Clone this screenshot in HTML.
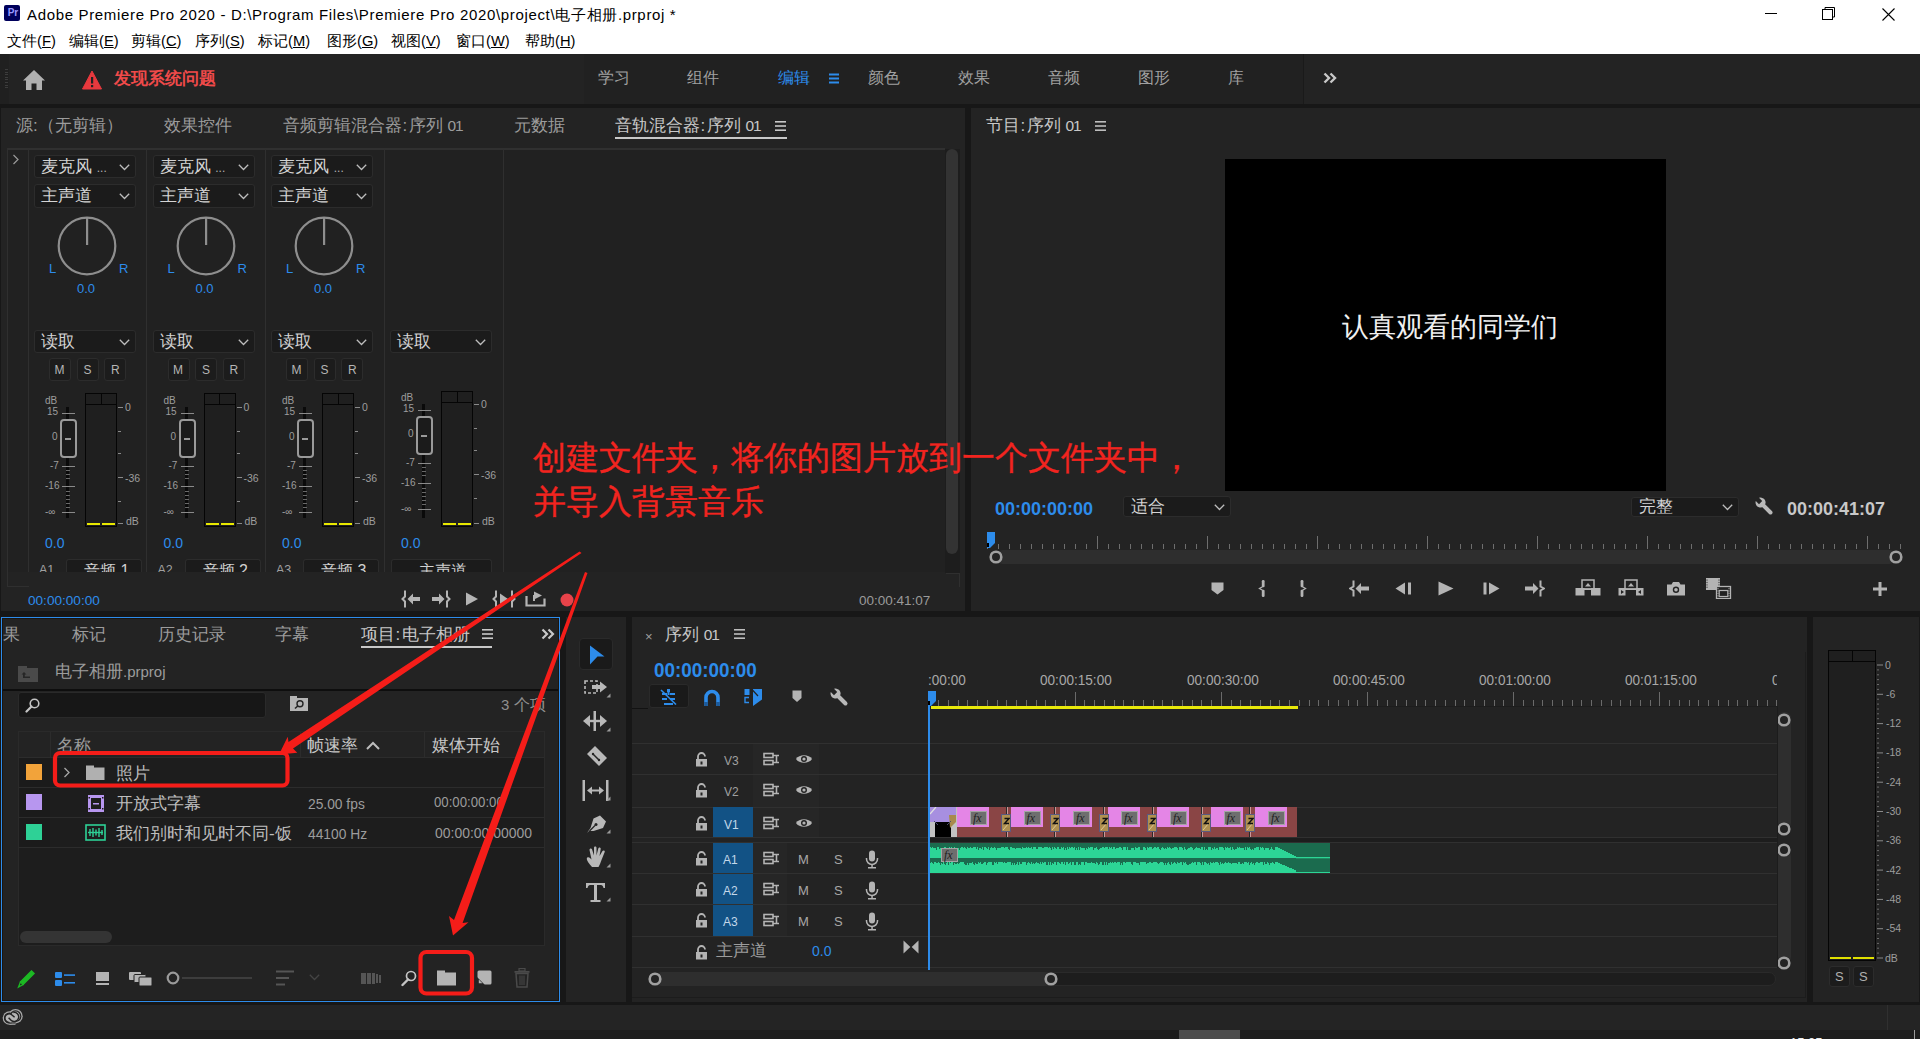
<!DOCTYPE html>
<html><head><meta charset="utf-8">
<style>
*{box-sizing:border-box;margin:0;padding:0}
html,body{width:1920px;height:1039px;overflow:hidden;background:#171717;font-family:"Liberation Sans",sans-serif;position:relative}
.a{position:absolute}
.t{position:absolute;white-space:nowrap;line-height:1}
</style></head><body>
<div class="a" style="left:0px;top:0px;width:1920px;height:54px;background:#fff;"></div>
<div class="a" style="left:4px;top:5px;width:16px;height:16px;background:#00005b;border-radius:2px"></div>
<div class="t" style="left:7.8px;top:8px;font-size:10px;color:#9999ff;font-weight:bold;letter-spacing:-0.3px">Pr</div>
<div class="t" style="left:27px;top:7.2px;font-size:15px;color:#000;letter-spacing:0.66px">Adobe Premiere Pro 2020 - D:\Program Files\Premiere Pro 2020\project\电子相册.prproj *</div>
<div class="t" style="left:7px;top:34px;font-size:14.7px;color:#000;">文件(<u>F</u>)</div>
<div class="t" style="left:69px;top:34px;font-size:14.7px;color:#000;">编辑(<u>E</u>)</div>
<div class="t" style="left:131px;top:34px;font-size:14.7px;color:#000;">剪辑(<u>C</u>)</div>
<div class="t" style="left:195px;top:34px;font-size:14.7px;color:#000;">序列(<u>S</u>)</div>
<div class="t" style="left:258px;top:34px;font-size:14.7px;color:#000;">标记(<u>M</u>)</div>
<div class="t" style="left:327px;top:34px;font-size:14.7px;color:#000;">图形(<u>G</u>)</div>
<div class="t" style="left:391px;top:34px;font-size:14.7px;color:#000;">视图(<u>V</u>)</div>
<div class="t" style="left:456px;top:34px;font-size:14.7px;color:#000;">窗口(<u>W</u>)</div>
<div class="t" style="left:525px;top:34px;font-size:14.7px;color:#000;">帮助(<u>H</u>)</div>
<svg class="a" style="left:1765px;top:13px;" width="14" height="2" viewBox="0 0 14 2"><rect x="0" y="0" width="12" height="1" fill="#000"/></svg>
<svg class="a" style="left:1822px;top:7px;" width="14" height="14" viewBox="0 0 14 14"><rect x="0.5" y="2.5" width="10" height="10" fill="none" stroke="#000"/><path d="M3 2.5V0.5H12.5V10H10.5" fill="none" stroke="#000"/></svg>
<svg class="a" style="left:1882px;top:8px;" width="14" height="14" viewBox="0 0 14 14"><path d="M0.5 0.5L12.5 12.5M12.5 0.5L0.5 12.5" stroke="#000" stroke-width="1.1"/></svg>
<div class="a" style="left:0px;top:54px;width:1920px;height:50px;background:#232323;"></div>
<div class="a" style="left:584px;top:54px;width:719px;height:50px;background:#212121;"></div>
<div class="a" style="left:1303px;top:54px;width:1px;height:50px;background:#1a1a1a;"></div>
<div class="a" style="left:0px;top:54px;width:9px;height:50px;background:#202020;"></div>
<div class="a" style="left:5px;top:69.0px;width:3px;height:1px;background:#3c3c3c;"></div>
<div class="a" style="left:5px;top:71.6px;width:3px;height:1px;background:#3c3c3c;"></div>
<div class="a" style="left:5px;top:74.2px;width:3px;height:1px;background:#3c3c3c;"></div>
<div class="a" style="left:5px;top:76.8px;width:3px;height:1px;background:#3c3c3c;"></div>
<div class="a" style="left:5px;top:79.4px;width:3px;height:1px;background:#3c3c3c;"></div>
<div class="a" style="left:5px;top:82.0px;width:3px;height:1px;background:#3c3c3c;"></div>
<div class="a" style="left:5px;top:84.6px;width:3px;height:1px;background:#3c3c3c;"></div>
<div class="a" style="left:5px;top:87.2px;width:3px;height:1px;background:#3c3c3c;"></div>
<svg class="a" style="left:22px;top:70px;" width="24" height="20" viewBox="0 0 24 20"><path d="M12 0L23 10.5H20V20H14.5V13.5H9.5V20H4V10.5H1Z" fill="#b0b0b0"/></svg>
<svg class="a" style="left:82px;top:70px;" width="20" height="20" viewBox="0 0 20 20"><path d="M10 1L19.5 19H0.5Z" fill="#e8393e" stroke="#e8393e" stroke-width="1" stroke-linejoin="round"/><rect x="9" y="7" width="2.2" height="6.5" fill="#232323"/><rect x="9" y="15" width="2.2" height="2.2" fill="#232323"/></svg>
<div class="t" style="left:113.5px;top:70px;font-size:16.5px;color:#f04a4a;font-weight:bold">发现系统问题</div>
<div class="t" style="left:598px;top:70px;font-size:16px;color:#a0a0a0;">学习</div>
<div class="t" style="left:687px;top:70px;font-size:16px;color:#a0a0a0;">组件</div>
<div class="t" style="left:868px;top:70px;font-size:16px;color:#a0a0a0;">颜色</div>
<div class="t" style="left:958px;top:70px;font-size:16px;color:#a0a0a0;">效果</div>
<div class="t" style="left:1048px;top:70px;font-size:16px;color:#a0a0a0;">音频</div>
<div class="t" style="left:1138px;top:70px;font-size:16px;color:#a0a0a0;">图形</div>
<div class="t" style="left:1228px;top:70px;font-size:16px;color:#a0a0a0;">库</div>
<div class="t" style="left:778px;top:70px;font-size:16px;color:#2d8ceb;">编辑</div>
<svg class="a" style="left:829px;top:73px;" width="10" height="11" viewBox="0 0 10 11"><rect x="0" y="0.5" width="10" height="2" fill="#2d8ceb"/><rect x="0" y="4.5" width="10" height="2" fill="#2d8ceb"/><rect x="0" y="8.5" width="10" height="2" fill="#2d8ceb"/></svg>
<svg class="a" style="left:1323px;top:72px;" width="14" height="12" viewBox="0 0 14 12"><path d="M1.5 1.5L6 6L1.5 10.5M7.5 1.5L12 6L7.5 10.5" fill="none" stroke="#c8c8c8" stroke-width="2.4"/></svg>
<div class="a" style="left:1px;top:108px;width:964px;height:503px;background:#232323;"></div>
<div class="t" style="left:16px;top:117px;font-size:17px;color:#9c9c9c;">源:（无剪辑）</div>
<div class="t" style="left:164px;top:117px;font-size:17px;color:#9c9c9c;">效果控件</div>
<div class="t" style="left:283px;top:117px;font-size:17px;color:#9c9c9c;">音频剪辑混合器<span style="margin:0 1.5px 0 0.5px">:</span>序列 <span style="font-size:15.5px;letter-spacing:-1px">01</span></div>
<div class="t" style="left:514px;top:117px;font-size:17px;color:#9c9c9c;">元数据</div>
<div class="t" style="left:615px;top:117px;font-size:17px;color:#c8c8c8;">音轨混合器<span style="margin:0 1.5px 0 0.5px">:</span>序列 <span style="font-size:15.5px;letter-spacing:-1px">01</span></div>
<svg class="a" style="left:775px;top:121px;" width="11" height="11" viewBox="0 0 11 11"><rect x="0" y="0" width="11" height="1.6" fill="#c8c8c8"/><rect x="0" y="4.2" width="11" height="1.6" fill="#c8c8c8"/><rect x="0" y="8.4" width="11" height="1.6" fill="#c8c8c8"/></svg>
<div class="a" style="left:615px;top:137px;width:172px;height:2px;background:#c8c8c8;"></div>
<div class="a" style="left:8px;top:149px;width:937px;height:423px;background:#212121;"></div>
<div class="a" style="left:7px;top:147.5px;width:938px;height:2px;background:#303030;"></div>
<div class="a" style="left:7px;top:148px;width:1px;height:439px;background:#2f2f2f;"></div>
<div class="a" style="left:7px;top:586px;width:22px;height:1px;background:#2f2f2f;"></div>
<div class="a" style="left:28px;top:149px;width:1px;height:423px;background:#2f2f2f;"></div>
<svg class="a" style="left:12px;top:154px;" width="8" height="12" viewBox="0 0 8 12"><path d="M1.5 1L6 5.5L1.5 10" fill="none" stroke="#9a9a9a" stroke-width="1.2"/></svg>
<div class="a" style="left:34px;top:155px;width:102px;height:23px;background:#1b1b1b;border:1px solid #2c2c2c;border-radius:3px"></div>
<div class="t" style="left:41px;top:157.5px;font-size:17px;color:#d4d4d4;">麦克风 <span style="font-size:12px;color:#b0b0b0;position:relative;top:0px">...</span></div>
<svg class="a" style="left:119px;top:163.5px;" width="11" height="7" viewBox="0 0 11 7"><path d="M0.8 0.8L5.5 5.5L10.2 0.8" fill="none" stroke="#bdbdbd" stroke-width="1.3"/></svg>
<div class="a" style="left:34px;top:184px;width:102px;height:24px;background:#1b1b1b;border:1px solid #2c2c2c;border-radius:3px"></div>
<div class="t" style="left:41px;top:187px;font-size:17px;color:#d4d4d4;">主声道</div>
<svg class="a" style="left:119px;top:193.0px;" width="11" height="7" viewBox="0 0 11 7"><path d="M0.8 0.8L5.5 5.5L10.2 0.8" fill="none" stroke="#bdbdbd" stroke-width="1.3"/></svg>
<svg class="a" style="left:56px;top:215px;" width="62" height="62" viewBox="0 0 62 62"><circle cx="31" cy="31" r="28.3" fill="none" stroke="#8e8e8e" stroke-width="2.2"/><rect x="30" y="2" width="2.2" height="28" fill="#8e8e8e"/></svg>
<div class="t" style="left:49px;top:262px;font-size:13px;color:#2d8ceb;">L</div>
<div class="t" style="left:119px;top:262px;font-size:13px;color:#2d8ceb;">R</div>
<div class="t" style="left:77px;top:282px;font-size:13px;color:#2d8ceb;">0.0</div>
<div class="a" style="left:34px;top:330px;width:102px;height:23px;background:#1b1b1b;border:1px solid #2c2c2c;border-radius:3px"></div>
<div class="t" style="left:41px;top:332.5px;font-size:17px;color:#d4d4d4;">读取</div>
<svg class="a" style="left:119px;top:338.5px;" width="11" height="7" viewBox="0 0 11 7"><path d="M0.8 0.8L5.5 5.5L10.2 0.8" fill="none" stroke="#bdbdbd" stroke-width="1.3"/></svg>
<div class="a" style="left:49.0px;top:358px;width:22px;height:23px;background:#1c1c1c;border:1px solid #2c2c2c;border-radius:3px"></div>
<div class="t" style="left:54.5px;top:364px;font-size:12px;color:#b5b5b5;">M</div>
<div class="a" style="left:76.5px;top:358px;width:22px;height:23px;background:#1c1c1c;border:1px solid #2c2c2c;border-radius:3px"></div>
<div class="t" style="left:83.5px;top:364px;font-size:12px;color:#b5b5b5;">S</div>
<div class="a" style="left:104.0px;top:358px;width:22px;height:23px;background:#1c1c1c;border:1px solid #2c2c2c;border-radius:3px"></div>
<div class="t" style="left:111.0px;top:364px;font-size:12px;color:#b5b5b5;">R</div>
<div class="t" style="left:45px;top:396px;font-size:10px;color:#9d9d9d;">dB</div>
<div class="t" style="left:47px;top:407px;font-size:10px;color:#9d9d9d;">15</div>
<div class="t" style="left:52px;top:432px;font-size:10px;color:#9d9d9d;">0</div>
<div class="t" style="left:50px;top:461px;font-size:10px;color:#9d9d9d;">-7</div>
<div class="t" style="left:45px;top:481px;font-size:10px;color:#9d9d9d;">-16</div>
<div class="t" style="left:45px;top:507px;font-size:10px;color:#9d9d9d;">-∞</div>
<div class="a" style="left:66px;top:407px;width:3px;height:111px;background:#0a0a0a;"></div>
<div class="a" style="left:62px;top:413px;width:13px;height:1px;background:#8a8a8a;"></div>
<div class="a" style="left:62px;top:466px;width:13px;height:1px;background:#8a8a8a;"></div>
<div class="a" style="left:62px;top:486px;width:13px;height:1px;background:#8a8a8a;"></div>
<div class="a" style="left:62px;top:512px;width:13px;height:1px;background:#8a8a8a;"></div>
<div class="a" style="left:66px;top:470px;width:4px;height:1px;background:#6a6a6a;"></div>
<div class="a" style="left:66px;top:474px;width:4px;height:1px;background:#6a6a6a;"></div>
<div class="a" style="left:66px;top:478px;width:4px;height:1px;background:#6a6a6a;"></div>
<div class="a" style="left:66px;top:491px;width:4px;height:1px;background:#6a6a6a;"></div>
<div class="a" style="left:66px;top:495px;width:4px;height:1px;background:#6a6a6a;"></div>
<div class="a" style="left:66px;top:499px;width:4px;height:1px;background:#6a6a6a;"></div>
<div class="a" style="left:66px;top:503px;width:4px;height:1px;background:#6a6a6a;"></div>
<div class="a" style="left:66px;top:507px;width:4px;height:1px;background:#6a6a6a;"></div>
<div class="a" style="left:66px;top:440px;width:4px;height:1px;background:#6a6a6a;"></div>
<div class="a" style="left:60px;top:419px;width:17px;height:39px;background:#1b1b1b;border:2px solid #9a9a9a;border-radius:4px"></div>
<div class="a" style="left:65px;top:437.5px;width:6px;height:2px;background:#9a9a9a;"></div>
<div class="a" style="left:85px;top:393px;width:32px;height:134px;background:#1f1f1f;border:1px solid #050505"></div>
<div class="a" style="left:85px;top:404px;width:32px;height:1px;background:#050505;"></div>
<div class="a" style="left:100.5px;top:393px;width:1px;height:12px;background:#050505;"></div>
<div class="a" style="left:87px;top:523px;width:13px;height:2px;background:#e8e800;"></div>
<div class="a" style="left:102px;top:523px;width:13px;height:2px;background:#e8e800;"></div>
<div class="a" style="left:118px;top:407px;width:5px;height:1px;background:#8a8a8a;"></div>
<div class="a" style="left:118px;top:431px;width:3px;height:1px;background:#8a8a8a;"></div>
<div class="a" style="left:118px;top:453px;width:3px;height:1px;background:#8a8a8a;"></div>
<div class="a" style="left:118px;top:477px;width:5px;height:1px;background:#8a8a8a;"></div>
<div class="a" style="left:118px;top:501px;width:3px;height:1px;background:#8a8a8a;"></div>
<div class="a" style="left:118px;top:523px;width:5px;height:1px;background:#8a8a8a;"></div>
<div class="t" style="left:125px;top:402px;font-size:10.5px;color:#9d9d9d;">0</div>
<div class="t" style="left:125px;top:473px;font-size:10.5px;color:#9d9d9d;">-36</div>
<div class="t" style="left:126px;top:516px;font-size:10.5px;color:#9d9d9d;">dB</div>
<div class="t" style="left:45px;top:536px;font-size:14px;color:#2d8ceb;">0.0</div>
<div class="t" style="left:39px;top:564px;font-size:12.5px;color:#a0a0a0;clip-path:inset(0 0 4px 0)">A1</div>
<div class="a" style="left:66px;top:559px;width:76px;height:14px;background:#1b1b1b;border:1px solid #2c2c2c;border-bottom:none;border-radius:3px 3px 0 0;overflow:hidden"></div>
<div class="t" style="left:84px;top:563px;font-size:16px;color:#d0d0d0;clip-path:inset(0 0 7px 0)">音频 1</div>
<div class="a" style="left:146px;top:149px;width:1px;height:423px;background:#2f2f2f;"></div>
<div class="a" style="left:152.5px;top:155px;width:102px;height:23px;background:#1b1b1b;border:1px solid #2c2c2c;border-radius:3px"></div>
<div class="t" style="left:159.5px;top:157.5px;font-size:17px;color:#d4d4d4;">麦克风 <span style="font-size:12px;color:#b0b0b0;position:relative;top:0px">...</span></div>
<svg class="a" style="left:237.5px;top:163.5px;" width="11" height="7" viewBox="0 0 11 7"><path d="M0.8 0.8L5.5 5.5L10.2 0.8" fill="none" stroke="#bdbdbd" stroke-width="1.3"/></svg>
<div class="a" style="left:152.5px;top:184px;width:102px;height:24px;background:#1b1b1b;border:1px solid #2c2c2c;border-radius:3px"></div>
<div class="t" style="left:159.5px;top:187px;font-size:17px;color:#d4d4d4;">主声道</div>
<svg class="a" style="left:237.5px;top:193.0px;" width="11" height="7" viewBox="0 0 11 7"><path d="M0.8 0.8L5.5 5.5L10.2 0.8" fill="none" stroke="#bdbdbd" stroke-width="1.3"/></svg>
<svg class="a" style="left:174.5px;top:215px;" width="62" height="62" viewBox="0 0 62 62"><circle cx="31" cy="31" r="28.3" fill="none" stroke="#8e8e8e" stroke-width="2.2"/><rect x="30" y="2" width="2.2" height="28" fill="#8e8e8e"/></svg>
<div class="t" style="left:167.5px;top:262px;font-size:13px;color:#2d8ceb;">L</div>
<div class="t" style="left:237.5px;top:262px;font-size:13px;color:#2d8ceb;">R</div>
<div class="t" style="left:195.5px;top:282px;font-size:13px;color:#2d8ceb;">0.0</div>
<div class="a" style="left:152.5px;top:330px;width:102px;height:23px;background:#1b1b1b;border:1px solid #2c2c2c;border-radius:3px"></div>
<div class="t" style="left:159.5px;top:332.5px;font-size:17px;color:#d4d4d4;">读取</div>
<svg class="a" style="left:237.5px;top:338.5px;" width="11" height="7" viewBox="0 0 11 7"><path d="M0.8 0.8L5.5 5.5L10.2 0.8" fill="none" stroke="#bdbdbd" stroke-width="1.3"/></svg>
<div class="a" style="left:167.5px;top:358px;width:22px;height:23px;background:#1c1c1c;border:1px solid #2c2c2c;border-radius:3px"></div>
<div class="t" style="left:173.0px;top:364px;font-size:12px;color:#b5b5b5;">M</div>
<div class="a" style="left:195.0px;top:358px;width:22px;height:23px;background:#1c1c1c;border:1px solid #2c2c2c;border-radius:3px"></div>
<div class="t" style="left:202.0px;top:364px;font-size:12px;color:#b5b5b5;">S</div>
<div class="a" style="left:222.5px;top:358px;width:22px;height:23px;background:#1c1c1c;border:1px solid #2c2c2c;border-radius:3px"></div>
<div class="t" style="left:229.5px;top:364px;font-size:12px;color:#b5b5b5;">R</div>
<div class="t" style="left:163.5px;top:396px;font-size:10px;color:#9d9d9d;">dB</div>
<div class="t" style="left:165.5px;top:407px;font-size:10px;color:#9d9d9d;">15</div>
<div class="t" style="left:170.5px;top:432px;font-size:10px;color:#9d9d9d;">0</div>
<div class="t" style="left:168.5px;top:461px;font-size:10px;color:#9d9d9d;">-7</div>
<div class="t" style="left:163.5px;top:481px;font-size:10px;color:#9d9d9d;">-16</div>
<div class="t" style="left:163.5px;top:507px;font-size:10px;color:#9d9d9d;">-∞</div>
<div class="a" style="left:184.5px;top:407px;width:3px;height:111px;background:#0a0a0a;"></div>
<div class="a" style="left:180.5px;top:413px;width:13px;height:1px;background:#8a8a8a;"></div>
<div class="a" style="left:180.5px;top:466px;width:13px;height:1px;background:#8a8a8a;"></div>
<div class="a" style="left:180.5px;top:486px;width:13px;height:1px;background:#8a8a8a;"></div>
<div class="a" style="left:180.5px;top:512px;width:13px;height:1px;background:#8a8a8a;"></div>
<div class="a" style="left:184.5px;top:470px;width:4px;height:1px;background:#6a6a6a;"></div>
<div class="a" style="left:184.5px;top:474px;width:4px;height:1px;background:#6a6a6a;"></div>
<div class="a" style="left:184.5px;top:478px;width:4px;height:1px;background:#6a6a6a;"></div>
<div class="a" style="left:184.5px;top:491px;width:4px;height:1px;background:#6a6a6a;"></div>
<div class="a" style="left:184.5px;top:495px;width:4px;height:1px;background:#6a6a6a;"></div>
<div class="a" style="left:184.5px;top:499px;width:4px;height:1px;background:#6a6a6a;"></div>
<div class="a" style="left:184.5px;top:503px;width:4px;height:1px;background:#6a6a6a;"></div>
<div class="a" style="left:184.5px;top:507px;width:4px;height:1px;background:#6a6a6a;"></div>
<div class="a" style="left:184.5px;top:440px;width:4px;height:1px;background:#6a6a6a;"></div>
<div class="a" style="left:178.5px;top:419px;width:17px;height:39px;background:#1b1b1b;border:2px solid #9a9a9a;border-radius:4px"></div>
<div class="a" style="left:183.5px;top:437.5px;width:6px;height:2px;background:#9a9a9a;"></div>
<div class="a" style="left:203.5px;top:393px;width:32px;height:134px;background:#1f1f1f;border:1px solid #050505"></div>
<div class="a" style="left:203.5px;top:404px;width:32px;height:1px;background:#050505;"></div>
<div class="a" style="left:219.0px;top:393px;width:1px;height:12px;background:#050505;"></div>
<div class="a" style="left:205.5px;top:523px;width:13px;height:2px;background:#e8e800;"></div>
<div class="a" style="left:220.5px;top:523px;width:13px;height:2px;background:#e8e800;"></div>
<div class="a" style="left:236.5px;top:407px;width:5px;height:1px;background:#8a8a8a;"></div>
<div class="a" style="left:236.5px;top:431px;width:3px;height:1px;background:#8a8a8a;"></div>
<div class="a" style="left:236.5px;top:453px;width:3px;height:1px;background:#8a8a8a;"></div>
<div class="a" style="left:236.5px;top:477px;width:5px;height:1px;background:#8a8a8a;"></div>
<div class="a" style="left:236.5px;top:501px;width:3px;height:1px;background:#8a8a8a;"></div>
<div class="a" style="left:236.5px;top:523px;width:5px;height:1px;background:#8a8a8a;"></div>
<div class="t" style="left:243.5px;top:402px;font-size:10.5px;color:#9d9d9d;">0</div>
<div class="t" style="left:243.5px;top:473px;font-size:10.5px;color:#9d9d9d;">-36</div>
<div class="t" style="left:244.5px;top:516px;font-size:10.5px;color:#9d9d9d;">dB</div>
<div class="t" style="left:163.5px;top:536px;font-size:14px;color:#2d8ceb;">0.0</div>
<div class="t" style="left:157.5px;top:564px;font-size:12.5px;color:#a0a0a0;clip-path:inset(0 0 4px 0)">A2</div>
<div class="a" style="left:184.5px;top:559px;width:76px;height:14px;background:#1b1b1b;border:1px solid #2c2c2c;border-bottom:none;border-radius:3px 3px 0 0;overflow:hidden"></div>
<div class="t" style="left:202.5px;top:563px;font-size:16px;color:#d0d0d0;clip-path:inset(0 0 7px 0)">音频 2</div>
<div class="a" style="left:265px;top:149px;width:1px;height:423px;background:#2f2f2f;"></div>
<div class="a" style="left:271px;top:155px;width:102px;height:23px;background:#1b1b1b;border:1px solid #2c2c2c;border-radius:3px"></div>
<div class="t" style="left:278px;top:157.5px;font-size:17px;color:#d4d4d4;">麦克风 <span style="font-size:12px;color:#b0b0b0;position:relative;top:0px">...</span></div>
<svg class="a" style="left:356px;top:163.5px;" width="11" height="7" viewBox="0 0 11 7"><path d="M0.8 0.8L5.5 5.5L10.2 0.8" fill="none" stroke="#bdbdbd" stroke-width="1.3"/></svg>
<div class="a" style="left:271px;top:184px;width:102px;height:24px;background:#1b1b1b;border:1px solid #2c2c2c;border-radius:3px"></div>
<div class="t" style="left:278px;top:187px;font-size:17px;color:#d4d4d4;">主声道</div>
<svg class="a" style="left:356px;top:193.0px;" width="11" height="7" viewBox="0 0 11 7"><path d="M0.8 0.8L5.5 5.5L10.2 0.8" fill="none" stroke="#bdbdbd" stroke-width="1.3"/></svg>
<svg class="a" style="left:293px;top:215px;" width="62" height="62" viewBox="0 0 62 62"><circle cx="31" cy="31" r="28.3" fill="none" stroke="#8e8e8e" stroke-width="2.2"/><rect x="30" y="2" width="2.2" height="28" fill="#8e8e8e"/></svg>
<div class="t" style="left:286px;top:262px;font-size:13px;color:#2d8ceb;">L</div>
<div class="t" style="left:356px;top:262px;font-size:13px;color:#2d8ceb;">R</div>
<div class="t" style="left:314px;top:282px;font-size:13px;color:#2d8ceb;">0.0</div>
<div class="a" style="left:271px;top:330px;width:102px;height:23px;background:#1b1b1b;border:1px solid #2c2c2c;border-radius:3px"></div>
<div class="t" style="left:278px;top:332.5px;font-size:17px;color:#d4d4d4;">读取</div>
<svg class="a" style="left:356px;top:338.5px;" width="11" height="7" viewBox="0 0 11 7"><path d="M0.8 0.8L5.5 5.5L10.2 0.8" fill="none" stroke="#bdbdbd" stroke-width="1.3"/></svg>
<div class="a" style="left:286.0px;top:358px;width:22px;height:23px;background:#1c1c1c;border:1px solid #2c2c2c;border-radius:3px"></div>
<div class="t" style="left:291.5px;top:364px;font-size:12px;color:#b5b5b5;">M</div>
<div class="a" style="left:313.5px;top:358px;width:22px;height:23px;background:#1c1c1c;border:1px solid #2c2c2c;border-radius:3px"></div>
<div class="t" style="left:320.5px;top:364px;font-size:12px;color:#b5b5b5;">S</div>
<div class="a" style="left:341.0px;top:358px;width:22px;height:23px;background:#1c1c1c;border:1px solid #2c2c2c;border-radius:3px"></div>
<div class="t" style="left:348.0px;top:364px;font-size:12px;color:#b5b5b5;">R</div>
<div class="t" style="left:282px;top:396px;font-size:10px;color:#9d9d9d;">dB</div>
<div class="t" style="left:284px;top:407px;font-size:10px;color:#9d9d9d;">15</div>
<div class="t" style="left:289px;top:432px;font-size:10px;color:#9d9d9d;">0</div>
<div class="t" style="left:287px;top:461px;font-size:10px;color:#9d9d9d;">-7</div>
<div class="t" style="left:282px;top:481px;font-size:10px;color:#9d9d9d;">-16</div>
<div class="t" style="left:282px;top:507px;font-size:10px;color:#9d9d9d;">-∞</div>
<div class="a" style="left:303px;top:407px;width:3px;height:111px;background:#0a0a0a;"></div>
<div class="a" style="left:299px;top:413px;width:13px;height:1px;background:#8a8a8a;"></div>
<div class="a" style="left:299px;top:466px;width:13px;height:1px;background:#8a8a8a;"></div>
<div class="a" style="left:299px;top:486px;width:13px;height:1px;background:#8a8a8a;"></div>
<div class="a" style="left:299px;top:512px;width:13px;height:1px;background:#8a8a8a;"></div>
<div class="a" style="left:303px;top:470px;width:4px;height:1px;background:#6a6a6a;"></div>
<div class="a" style="left:303px;top:474px;width:4px;height:1px;background:#6a6a6a;"></div>
<div class="a" style="left:303px;top:478px;width:4px;height:1px;background:#6a6a6a;"></div>
<div class="a" style="left:303px;top:491px;width:4px;height:1px;background:#6a6a6a;"></div>
<div class="a" style="left:303px;top:495px;width:4px;height:1px;background:#6a6a6a;"></div>
<div class="a" style="left:303px;top:499px;width:4px;height:1px;background:#6a6a6a;"></div>
<div class="a" style="left:303px;top:503px;width:4px;height:1px;background:#6a6a6a;"></div>
<div class="a" style="left:303px;top:507px;width:4px;height:1px;background:#6a6a6a;"></div>
<div class="a" style="left:303px;top:440px;width:4px;height:1px;background:#6a6a6a;"></div>
<div class="a" style="left:297px;top:419px;width:17px;height:39px;background:#1b1b1b;border:2px solid #9a9a9a;border-radius:4px"></div>
<div class="a" style="left:302px;top:437.5px;width:6px;height:2px;background:#9a9a9a;"></div>
<div class="a" style="left:322px;top:393px;width:32px;height:134px;background:#1f1f1f;border:1px solid #050505"></div>
<div class="a" style="left:322px;top:404px;width:32px;height:1px;background:#050505;"></div>
<div class="a" style="left:337.5px;top:393px;width:1px;height:12px;background:#050505;"></div>
<div class="a" style="left:324px;top:523px;width:13px;height:2px;background:#e8e800;"></div>
<div class="a" style="left:339px;top:523px;width:13px;height:2px;background:#e8e800;"></div>
<div class="a" style="left:355px;top:407px;width:5px;height:1px;background:#8a8a8a;"></div>
<div class="a" style="left:355px;top:431px;width:3px;height:1px;background:#8a8a8a;"></div>
<div class="a" style="left:355px;top:453px;width:3px;height:1px;background:#8a8a8a;"></div>
<div class="a" style="left:355px;top:477px;width:5px;height:1px;background:#8a8a8a;"></div>
<div class="a" style="left:355px;top:501px;width:3px;height:1px;background:#8a8a8a;"></div>
<div class="a" style="left:355px;top:523px;width:5px;height:1px;background:#8a8a8a;"></div>
<div class="t" style="left:362px;top:402px;font-size:10.5px;color:#9d9d9d;">0</div>
<div class="t" style="left:362px;top:473px;font-size:10.5px;color:#9d9d9d;">-36</div>
<div class="t" style="left:363px;top:516px;font-size:10.5px;color:#9d9d9d;">dB</div>
<div class="t" style="left:282px;top:536px;font-size:14px;color:#2d8ceb;">0.0</div>
<div class="t" style="left:276px;top:564px;font-size:12.5px;color:#a0a0a0;clip-path:inset(0 0 4px 0)">A3</div>
<div class="a" style="left:303px;top:559px;width:76px;height:14px;background:#1b1b1b;border:1px solid #2c2c2c;border-bottom:none;border-radius:3px 3px 0 0;overflow:hidden"></div>
<div class="t" style="left:321px;top:563px;font-size:16px;color:#d0d0d0;clip-path:inset(0 0 7px 0)">音频 3</div>
<div class="a" style="left:384px;top:149px;width:1px;height:423px;background:#2f2f2f;"></div>
<div class="a" style="left:390px;top:330px;width:102px;height:23px;background:#1b1b1b;border:1px solid #2c2c2c;border-radius:3px"></div>
<div class="t" style="left:397px;top:332.5px;font-size:17px;color:#d4d4d4;">读取</div>
<svg class="a" style="left:475px;top:338.5px;" width="11" height="7" viewBox="0 0 11 7"><path d="M0.8 0.8L5.5 5.5L10.2 0.8" fill="none" stroke="#bdbdbd" stroke-width="1.3"/></svg>
<div class="t" style="left:401px;top:393px;font-size:10px;color:#9d9d9d;">dB</div>
<div class="t" style="left:403px;top:404px;font-size:10px;color:#9d9d9d;">15</div>
<div class="t" style="left:408px;top:429px;font-size:10px;color:#9d9d9d;">0</div>
<div class="t" style="left:406px;top:458px;font-size:10px;color:#9d9d9d;">-7</div>
<div class="t" style="left:401px;top:478px;font-size:10px;color:#9d9d9d;">-16</div>
<div class="t" style="left:401px;top:504px;font-size:10px;color:#9d9d9d;">-∞</div>
<div class="a" style="left:422px;top:404px;width:3px;height:114px;background:#0a0a0a;"></div>
<div class="a" style="left:418px;top:410px;width:13px;height:1px;background:#8a8a8a;"></div>
<div class="a" style="left:418px;top:463px;width:13px;height:1px;background:#8a8a8a;"></div>
<div class="a" style="left:418px;top:483px;width:13px;height:1px;background:#8a8a8a;"></div>
<div class="a" style="left:418px;top:509px;width:13px;height:1px;background:#8a8a8a;"></div>
<div class="a" style="left:422px;top:467px;width:4px;height:1px;background:#6a6a6a;"></div>
<div class="a" style="left:422px;top:471px;width:4px;height:1px;background:#6a6a6a;"></div>
<div class="a" style="left:422px;top:475px;width:4px;height:1px;background:#6a6a6a;"></div>
<div class="a" style="left:422px;top:488px;width:4px;height:1px;background:#6a6a6a;"></div>
<div class="a" style="left:422px;top:492px;width:4px;height:1px;background:#6a6a6a;"></div>
<div class="a" style="left:422px;top:496px;width:4px;height:1px;background:#6a6a6a;"></div>
<div class="a" style="left:422px;top:500px;width:4px;height:1px;background:#6a6a6a;"></div>
<div class="a" style="left:422px;top:504px;width:4px;height:1px;background:#6a6a6a;"></div>
<div class="a" style="left:422px;top:437px;width:4px;height:1px;background:#6a6a6a;"></div>
<div class="a" style="left:416px;top:416px;width:17px;height:39px;background:#1b1b1b;border:2px solid #9a9a9a;border-radius:4px"></div>
<div class="a" style="left:421px;top:434.5px;width:6px;height:2px;background:#9a9a9a;"></div>
<div class="a" style="left:441px;top:391px;width:32px;height:136px;background:#1f1f1f;border:1px solid #050505"></div>
<div class="a" style="left:441px;top:402px;width:32px;height:1px;background:#050505;"></div>
<div class="a" style="left:456.5px;top:391px;width:1px;height:12px;background:#050505;"></div>
<div class="a" style="left:443px;top:523px;width:13px;height:2px;background:#e8e800;"></div>
<div class="a" style="left:458px;top:523px;width:13px;height:2px;background:#e8e800;"></div>
<div class="a" style="left:474px;top:404px;width:5px;height:1px;background:#8a8a8a;"></div>
<div class="a" style="left:474px;top:428px;width:3px;height:1px;background:#8a8a8a;"></div>
<div class="a" style="left:474px;top:450px;width:3px;height:1px;background:#8a8a8a;"></div>
<div class="a" style="left:474px;top:474px;width:5px;height:1px;background:#8a8a8a;"></div>
<div class="a" style="left:474px;top:498px;width:3px;height:1px;background:#8a8a8a;"></div>
<div class="a" style="left:474px;top:523px;width:5px;height:1px;background:#8a8a8a;"></div>
<div class="t" style="left:481px;top:399px;font-size:10.5px;color:#9d9d9d;">0</div>
<div class="t" style="left:481px;top:470px;font-size:10.5px;color:#9d9d9d;">-36</div>
<div class="t" style="left:482px;top:516px;font-size:10.5px;color:#9d9d9d;">dB</div>
<div class="t" style="left:401px;top:536px;font-size:14px;color:#2d8ceb;">0.0</div>
<div class="a" style="left:391px;top:559px;width:101px;height:14px;background:#1b1b1b;border:1px solid #2c2c2c;border-bottom:none;border-radius:3px 3px 0 0"></div>
<div class="t" style="left:419px;top:563px;font-size:16px;color:#d0d0d0;clip-path:inset(0 0 7px 0)">主声道</div>
<div class="a" style="left:503px;top:149px;width:1px;height:423px;background:#2f2f2f;"></div>
<div class="a" style="left:7px;top:572px;width:940px;height:14px;background:#232323;"></div>
<div class="a" style="left:7px;top:586px;width:22px;height:1px;background:#2f2f2f;"></div>
<div class="a" style="left:7px;top:148px;width:1px;height:439px;background:#2f2f2f;"></div>
<div class="a" style="left:945px;top:149px;width:15px;height:424px;background:#1d1d1d;"></div>
<div class="a" style="left:946px;top:149px;width:12px;height:405px;background:#333;border-radius:6px"></div>
<div class="a" style="left:946px;top:573px;width:14px;height:1px;background:#2f2f2f;"></div>
<div class="a" style="left:959px;top:573px;width:1px;height:14px;background:#2f2f2f;"></div>
<div class="t" style="left:28px;top:593.5px;font-size:13.6px;color:#2d8ceb;">00:00:00:00</div>
<div class="t" style="left:859px;top:594px;font-size:13.5px;color:#9a9a9a;">00:00:41:07</div>
<svg class="a" style="left:401px;top:590px;" width="20" height="18" viewBox="0 0 20 18"><path d="M4 0.5V6.5L1.5 9L4 11.5V17.5" fill="none" stroke="#b4b4b4" stroke-width="2"/><path d="M6.5 9L12 3.5V7H19V11H12V14.5Z" fill="#b4b4b4"/></svg>
<svg class="a" style="left:431px;top:590px;" width="20" height="18" viewBox="0 0 20 18"><path d="M16 0.5V6.5L18.5 9L16 11.5V17.5" fill="none" stroke="#b4b4b4" stroke-width="2"/><path d="M13.5 9L8 3.5V7H1V11H8V14.5Z" fill="#b4b4b4"/></svg>
<svg class="a" style="left:465px;top:592px;" width="14" height="14" viewBox="0 0 14 14"><path d="M1 0.5L13 7L1 13.5Z" fill="#b4b4b4"/></svg>
<svg class="a" style="left:492px;top:590px;" width="24" height="18" viewBox="0 0 24 18"><path d="M4 0.5V6.5L1.5 9L4 11.5V17.5M20 0.5V6.5L22.5 9L20 11.5V17.5" fill="none" stroke="#b4b4b4" stroke-width="2"/><path d="M8 3.5L16 9L8 14.5Z" fill="#b4b4b4"/></svg>
<svg class="a" style="left:525px;top:591px;" width="21" height="16" viewBox="0 0 21 16"><path d="M1.5 5V14.5H19.5V7.5" fill="none" stroke="#b4b4b4" stroke-width="2.2"/><path d="M9 0.5L17 4.5L9 8.5Z" fill="#b4b4b4"/><rect x="8" y="4" width="2" height="6" fill="#b4b4b4"/></svg>
<svg class="a" style="left:560px;top:593px;" width="14" height="14" viewBox="0 0 14 14"><circle cx="7" cy="7" r="6.5" fill="#e8434a"/></svg>
<div class="a" style="left:971px;top:108px;width:949px;height:503px;background:#232323;"></div>
<div class="t" style="left:986px;top:117px;font-size:17px;color:#c8c8c8;">节目<span style="margin:0 1.5px 0 0.5px">:</span>序列 <span style="font-size:15.5px;letter-spacing:-1px">01</span></div>
<svg class="a" style="left:1095px;top:121px;" width="11" height="11" viewBox="0 0 11 11"><rect x="0" y="0" width="11" height="1.6" fill="#bdbdbd"/><rect x="0" y="4.2" width="11" height="1.6" fill="#bdbdbd"/><rect x="0" y="8.4" width="11" height="1.6" fill="#bdbdbd"/></svg>
<div class="a" style="left:1225px;top:159px;width:441px;height:332px;background:#000;"></div>
<div class="t" style="left:1342px;top:314px;font-size:26.8px;color:#f0f0f0;font-family:&quot;Liberation Serif&quot;,serif">认真观看的同学们</div>
<div class="t" style="left:995px;top:499.5px;font-size:18px;color:#2d8ceb;font-weight:bold">00:00:00:00</div>
<div class="a" style="left:1123px;top:496px;width:108px;height:21px;background:#1b1b1b;border:1px solid #2c2c2c;border-radius:3px"></div>
<div class="t" style="left:1131px;top:497.5px;font-size:17px;color:#d4d4d4;">适合</div>
<svg class="a" style="left:1214px;top:503.5px;" width="11" height="7" viewBox="0 0 11 7"><path d="M0.8 0.8L5.5 5.5L10.2 0.8" fill="none" stroke="#bdbdbd" stroke-width="1.3"/></svg>
<div class="a" style="left:1631px;top:497px;width:108px;height:20px;background:#1b1b1b;border:1px solid #2c2c2c;border-radius:3px"></div>
<div class="t" style="left:1639px;top:498px;font-size:17px;color:#d4d4d4;">完整</div>
<svg class="a" style="left:1722px;top:504.0px;" width="11" height="7" viewBox="0 0 11 7"><path d="M0.8 0.8L5.5 5.5L10.2 0.8" fill="none" stroke="#bdbdbd" stroke-width="1.3"/></svg>
<svg class="a" style="left:1755px;top:497px;" width="19" height="19" viewBox="0 0 19 19"><path d="M15.5 15.5L8.5 8.5" stroke="#b8b8b8" stroke-width="4" stroke-linecap="round"/><path d="M10.5 6.5A5 5 0 0 0 4 0.8L7.2 4L4 7.2L0.8 4A5 5 0 0 0 6.5 10.5Z" fill="#b8b8b8"/></svg>
<div class="t" style="left:1787px;top:499.5px;font-size:18px;color:#c8c8c8;font-weight:bold">00:00:41:07</div>
<svg class="a" style="left:971px;top:532px;" width="949" height="18" viewBox="0 0 949 18"><rect x="16" y="4" width="1" height="13" fill="#6e6e6e"/><rect x="27" y="12" width="1" height="5" fill="#6e6e6e"/><rect x="38" y="12" width="1" height="5" fill="#6e6e6e"/><rect x="49" y="12" width="1" height="5" fill="#6e6e6e"/><rect x="60" y="12" width="1" height="5" fill="#6e6e6e"/><rect x="71" y="12" width="1" height="5" fill="#6e6e6e"/><rect x="82" y="12" width="1" height="5" fill="#6e6e6e"/><rect x="93" y="12" width="1" height="5" fill="#6e6e6e"/><rect x="104" y="12" width="1" height="5" fill="#6e6e6e"/><rect x="115" y="12" width="1" height="5" fill="#6e6e6e"/><rect x="126" y="4" width="1" height="13" fill="#6e6e6e"/><rect x="137" y="12" width="1" height="5" fill="#6e6e6e"/><rect x="148" y="12" width="1" height="5" fill="#6e6e6e"/><rect x="159" y="12" width="1" height="5" fill="#6e6e6e"/><rect x="170" y="12" width="1" height="5" fill="#6e6e6e"/><rect x="181" y="12" width="1" height="5" fill="#6e6e6e"/><rect x="192" y="12" width="1" height="5" fill="#6e6e6e"/><rect x="203" y="12" width="1" height="5" fill="#6e6e6e"/><rect x="214" y="12" width="1" height="5" fill="#6e6e6e"/><rect x="225" y="12" width="1" height="5" fill="#6e6e6e"/><rect x="236" y="4" width="1" height="13" fill="#6e6e6e"/><rect x="247" y="12" width="1" height="5" fill="#6e6e6e"/><rect x="258" y="12" width="1" height="5" fill="#6e6e6e"/><rect x="269" y="12" width="1" height="5" fill="#6e6e6e"/><rect x="280" y="12" width="1" height="5" fill="#6e6e6e"/><rect x="291" y="12" width="1" height="5" fill="#6e6e6e"/><rect x="302" y="12" width="1" height="5" fill="#6e6e6e"/><rect x="313" y="12" width="1" height="5" fill="#6e6e6e"/><rect x="324" y="12" width="1" height="5" fill="#6e6e6e"/><rect x="335" y="12" width="1" height="5" fill="#6e6e6e"/><rect x="346" y="4" width="1" height="13" fill="#6e6e6e"/><rect x="357" y="12" width="1" height="5" fill="#6e6e6e"/><rect x="368" y="12" width="1" height="5" fill="#6e6e6e"/><rect x="379" y="12" width="1" height="5" fill="#6e6e6e"/><rect x="390" y="12" width="1" height="5" fill="#6e6e6e"/><rect x="401" y="12" width="1" height="5" fill="#6e6e6e"/><rect x="412" y="12" width="1" height="5" fill="#6e6e6e"/><rect x="423" y="12" width="1" height="5" fill="#6e6e6e"/><rect x="434" y="12" width="1" height="5" fill="#6e6e6e"/><rect x="445" y="12" width="1" height="5" fill="#6e6e6e"/><rect x="456" y="4" width="1" height="13" fill="#6e6e6e"/><rect x="467" y="12" width="1" height="5" fill="#6e6e6e"/><rect x="478" y="12" width="1" height="5" fill="#6e6e6e"/><rect x="489" y="12" width="1" height="5" fill="#6e6e6e"/><rect x="500" y="12" width="1" height="5" fill="#6e6e6e"/><rect x="511" y="12" width="1" height="5" fill="#6e6e6e"/><rect x="522" y="12" width="1" height="5" fill="#6e6e6e"/><rect x="533" y="12" width="1" height="5" fill="#6e6e6e"/><rect x="544" y="12" width="1" height="5" fill="#6e6e6e"/><rect x="555" y="12" width="1" height="5" fill="#6e6e6e"/><rect x="566" y="4" width="1" height="13" fill="#6e6e6e"/><rect x="577" y="12" width="1" height="5" fill="#6e6e6e"/><rect x="588" y="12" width="1" height="5" fill="#6e6e6e"/><rect x="599" y="12" width="1" height="5" fill="#6e6e6e"/><rect x="610" y="12" width="1" height="5" fill="#6e6e6e"/><rect x="621" y="12" width="1" height="5" fill="#6e6e6e"/><rect x="632" y="12" width="1" height="5" fill="#6e6e6e"/><rect x="643" y="12" width="1" height="5" fill="#6e6e6e"/><rect x="654" y="12" width="1" height="5" fill="#6e6e6e"/><rect x="665" y="12" width="1" height="5" fill="#6e6e6e"/><rect x="676" y="4" width="1" height="13" fill="#6e6e6e"/><rect x="687" y="12" width="1" height="5" fill="#6e6e6e"/><rect x="698" y="12" width="1" height="5" fill="#6e6e6e"/><rect x="709" y="12" width="1" height="5" fill="#6e6e6e"/><rect x="720" y="12" width="1" height="5" fill="#6e6e6e"/><rect x="731" y="12" width="1" height="5" fill="#6e6e6e"/><rect x="742" y="12" width="1" height="5" fill="#6e6e6e"/><rect x="753" y="12" width="1" height="5" fill="#6e6e6e"/><rect x="764" y="12" width="1" height="5" fill="#6e6e6e"/><rect x="775" y="12" width="1" height="5" fill="#6e6e6e"/><rect x="786" y="4" width="1" height="13" fill="#6e6e6e"/><rect x="797" y="12" width="1" height="5" fill="#6e6e6e"/><rect x="808" y="12" width="1" height="5" fill="#6e6e6e"/><rect x="819" y="12" width="1" height="5" fill="#6e6e6e"/><rect x="830" y="12" width="1" height="5" fill="#6e6e6e"/><rect x="841" y="12" width="1" height="5" fill="#6e6e6e"/><rect x="852" y="12" width="1" height="5" fill="#6e6e6e"/><rect x="863" y="12" width="1" height="5" fill="#6e6e6e"/><rect x="874" y="12" width="1" height="5" fill="#6e6e6e"/><rect x="885" y="12" width="1" height="5" fill="#6e6e6e"/><rect x="896" y="4" width="1" height="13" fill="#6e6e6e"/><rect x="907" y="12" width="1" height="5" fill="#6e6e6e"/><rect x="918" y="12" width="1" height="5" fill="#6e6e6e"/><rect x="929" y="12" width="1" height="5" fill="#6e6e6e"/></svg>
<div class="a" style="left:996px;top:550px;width:900px;height:14px;background:#2e2e2e;border-radius:7px"></div>
<svg class="a" style="left:987px;top:532px;" width="8" height="16" viewBox="0 0 8 16"><path d="M0 0H8V11L3 16H0Z" fill="#2d8ceb"/><rect x="0" y="11" width="2" height="4" fill="#000"/></svg>
<svg class="a" style="left:989px;top:550px;" width="14" height="14" viewBox="0 0 14 14"><circle cx="7" cy="7" r="5.3" fill="#232323" stroke="#a0a0a0" stroke-width="2.6"/></svg>
<svg class="a" style="left:1889px;top:550px;" width="14" height="14" viewBox="0 0 14 14"><circle cx="7" cy="7" r="5.3" fill="#232323" stroke="#a0a0a0" stroke-width="2.6"/></svg>
<svg class="a" style="left:1211px;top:582px;" width="13" height="13" viewBox="0 0 13 13"><path d="M0.5 0.5H12.5V8L6.5 12.5L0.5 8Z" fill="#b4b4b4"/></svg>
<svg class="a" style="left:1258px;top:580px;" width="8" height="17" viewBox="0 0 8 17"><rect x="3.8" y="0" width="2.8" height="7.2" rx="1.2" fill="#b4b4b4"/><rect x="3.8" y="9.8" width="2.8" height="7.2" rx="1.2" fill="#b4b4b4"/><path d="M4.5 6.8L1.5 8.5L4.5 10.2" fill="none" stroke="#b4b4b4" stroke-width="1.3"/></svg>
<svg class="a" style="left:1299px;top:580px;" width="8" height="17" viewBox="0 0 8 17"><rect x="1.6" y="0" width="2.8" height="7.2" rx="1.2" fill="#b4b4b4"/><rect x="1.6" y="9.8" width="2.8" height="7.2" rx="1.2" fill="#b4b4b4"/><path d="M3.5 6.8L6.5 8.5L3.5 10.2" fill="none" stroke="#b4b4b4" stroke-width="1.3"/></svg>
<svg class="a" style="left:1349px;top:580px;" width="22" height="17" viewBox="0 0 22 17"><path d="M4.5 0.5V6.5L1 8.5L4.5 10.5V16.5" fill="none" stroke="#b4b4b4" stroke-width="2"/><path d="M6.5 8.5L12 3V6.5H20V10.5H12V14Z" fill="#b4b4b4"/></svg>
<svg class="a" style="left:1395px;top:582px;" width="17" height="13" viewBox="0 0 17 13"><path d="M10 0.5V12.5L0.5 6.5Z" fill="#b4b4b4"/><rect x="13" y="0.5" width="3" height="12" fill="#b4b4b4"/></svg>
<svg class="a" style="left:1438px;top:581px;" width="16" height="15" viewBox="0 0 16 15"><path d="M0.5 0.5L15.5 7.5L0.5 14.5Z" fill="#b4b4b4"/></svg>
<svg class="a" style="left:1483px;top:582px;" width="17" height="13" viewBox="0 0 17 13"><path d="M6 0.5V12.5L16.5 6.5Z" fill="#b4b4b4"/><rect x="0.5" y="0.5" width="3" height="12" fill="#b4b4b4"/></svg>
<svg class="a" style="left:1523px;top:580px;" width="22" height="17" viewBox="0 0 22 17"><path d="M17.5 0.5V6.5L21 8.5L17.5 10.5V16.5" fill="none" stroke="#b4b4b4" stroke-width="2"/><path d="M15.5 8.5L10 3V6.5H2V10.5H10V14Z" fill="#b4b4b4"/></svg>
<svg class="a" style="left:1575px;top:579px;" width="26" height="17" viewBox="0 0 26 17"><rect x="0.5" y="9" width="9" height="7.5" fill="#b4b4b4"/><rect x="16" y="9" width="9.5" height="7.5" fill="#b4b4b4"/><rect x="7" y="1" width="12" height="9" fill="none" stroke="#b4b4b4" stroke-width="1.5"/><path d="M10 7.5L13 4L16 7.5Z" fill="#b4b4b4"/><rect x="7" y="9.5" width="12" height="1.5" fill="#b4b4b4"/></svg>
<svg class="a" style="left:1618px;top:579px;" width="26" height="17" viewBox="0 0 26 17"><rect x="0.5" y="9" width="7" height="7.5" fill="#b4b4b4"/><rect x="18" y="9" width="7.5" height="7.5" fill="#b4b4b4"/><rect x="7" y="1" width="12" height="9" fill="none" stroke="#b4b4b4" stroke-width="1.5"/><path d="M10 7.5L13 4L16 7.5Z" fill="#b4b4b4"/><rect x="7" y="9.5" width="12" height="1.5" fill="#b4b4b4"/><path d="M3 11L6 13L3 15Z" fill="#232323"/><path d="M23 11L20 13L23 15Z" fill="#232323"/></svg>
<svg class="a" style="left:1666px;top:581px;" width="20" height="15" viewBox="0 0 20 15"><path d="M1 3.5H5.5L7 1H13L14.5 3.5H19V14.5H1Z" fill="#b4b4b4"/><circle cx="10" cy="8.8" r="3.2" fill="#232323"/><circle cx="10" cy="8.8" r="1.8" fill="#b4b4b4"/></svg>
<svg class="a" style="left:1706px;top:578px;" width="26" height="21" viewBox="0 0 26 21"><rect x="0" y="0" width="14" height="12" fill="#b4b4b4"/><path d="M1 1.5V11M13 1.5V11" stroke="#232323" stroke-width="0.9" stroke-dasharray="1.2 1.2"/><rect x="2.5" y="1" width="9" height="10" fill="#b4b4b4"/><rect x="10.5" y="8.5" width="14" height="12" fill="#232323" stroke="#b4b4b4" stroke-width="1.3"/><path d="M12 10V19.5M23 10V19.5" stroke="#b4b4b4" stroke-width="0.9" stroke-dasharray="1.2 1.2"/><rect x="13.2" y="12.5" width="8.6" height="6" fill="none" stroke="#b4b4b4" stroke-width="1.2"/></svg>
<svg class="a" style="left:1873px;top:582px;" width="14" height="14" viewBox="0 0 14 14"><rect x="5.5" y="0" width="3" height="14" fill="#b4b4b4"/><rect x="0" y="5.5" width="14" height="3" fill="#b4b4b4"/></svg>
<div class="t" style="left:533px;top:441px;font-size:33px;color:#f2241f;-webkit-text-stroke:0.35px #f2241f">创建文件夹，将你的图片放到一个文件夹中，</div>
<div class="t" style="left:533px;top:484.5px;font-size:33px;color:#f2241f;-webkit-text-stroke:0.35px #f2241f">并导入背景音乐</div>
<div class="a" style="left:1px;top:617px;width:559px;height:385px;background:#232323;border:1px solid #2d8ceb;box-shadow:inset 0 0 0 1px #1a1510"></div>
<div class="t" style="left:3px;top:626px;font-size:17px;color:#9c9c9c;">果</div>
<div class="t" style="left:72px;top:626px;font-size:17px;color:#9c9c9c;">标记</div>
<div class="t" style="left:158px;top:626px;font-size:17px;color:#9c9c9c;">历史记录</div>
<div class="t" style="left:275px;top:626px;font-size:17px;color:#9c9c9c;">字幕</div>
<div class="t" style="left:361px;top:626px;font-size:17px;color:#c8c8c8;">项目<span style="margin:0 1.5px 0 0.5px">:</span>电子相册</div>
<svg class="a" style="left:482px;top:629px;" width="11" height="11" viewBox="0 0 11 11"><rect x="0" y="0" width="11" height="1.6" fill="#c8c8c8"/><rect x="0" y="4.2" width="11" height="1.6" fill="#c8c8c8"/><rect x="0" y="8.4" width="11" height="1.6" fill="#c8c8c8"/></svg>
<div class="a" style="left:361px;top:646px;width:131px;height:2px;background:#c8c8c8;"></div>
<svg class="a" style="left:541px;top:628px;" width="14" height="12" viewBox="0 0 14 12"><path d="M1.5 1.5L6 6L1.5 10.5M7.5 1.5L12 6L7.5 10.5" fill="none" stroke="#c8c8c8" stroke-width="2.2"/></svg>
<svg class="a" style="left:18px;top:666px;" width="21" height="16" viewBox="0 0 21 16"><rect x="0" y="2" width="20" height="14" fill="#4a4a4a"/><rect x="0" y="0" width="9" height="2" fill="#4a4a4a"/><path d="M6 6L3.5 8.5H5V12H12V10.5H6.8V8.5H8.5Z" fill="#262626"/></svg>
<div class="t" style="left:55px;top:663px;font-size:17px;color:#9c9c9c;">电子相册<span style="font-size:15px">.prproj</span></div>
<div class="a" style="left:3px;top:689px;width:555px;height:2px;background:#0e0e0e;"></div>
<div class="a" style="left:18px;top:692px;width:248px;height:26px;background:#171717;border:1px solid #2a2a2a;border-radius:3px"></div>
<svg class="a" style="left:25px;top:698px;" width="15" height="15" viewBox="0 0 15 15"><circle cx="9.5" cy="5.5" r="4.3" fill="none" stroke="#c4c4c4" stroke-width="1.6"/><path d="M6.5 8.5L1.5 13.5" stroke="#c4c4c4" stroke-width="2.2" stroke-linecap="round"/></svg>
<svg class="a" style="left:290px;top:696px;" width="19" height="16" viewBox="0 0 19 16"><rect x="0" y="2" width="18" height="13" fill="#b4b4b4"/><rect x="0" y="0" width="7" height="2" fill="#b4b4b4"/><circle cx="10" cy="7.8" r="3" fill="none" stroke="#232323" stroke-width="1.4"/><path d="M7.8 10L5 12.5" stroke="#232323" stroke-width="1.6"/></svg>
<div class="t" style="left:501px;top:697px;font-size:15px;color:#8f8f8f;">3 <span style="font-size:16px">个项</span></div>
<div class="a" style="left:18px;top:731px;width:527px;height:215px;background:#1d1d1d;border:1px solid #2a2a2a"></div>
<div class="a" style="left:19px;top:732px;width:525px;height:25px;background:#232323;"></div>
<div class="a" style="left:19px;top:757px;width:525px;height:1px;background:#2c2c2c;"></div>
<div class="a" style="left:50px;top:732px;width:1px;height:25px;background:#2c2c2c;"></div>
<div class="a" style="left:300px;top:732px;width:1px;height:25px;background:#2c2c2c;"></div>
<div class="a" style="left:424px;top:732px;width:1px;height:25px;background:#2c2c2c;"></div>
<div class="t" style="left:57px;top:737px;font-size:17px;color:#9c9c9c;">名称</div>
<div class="t" style="left:307px;top:737px;font-size:17px;color:#c8c8c8;">帧速率</div>
<svg class="a" style="left:366px;top:741px;" width="14" height="9" viewBox="0 0 14 9"><path d="M1 8L7 2L13 8" fill="none" stroke="#bdbdbd" stroke-width="2"/></svg>
<div class="t" style="left:432px;top:737px;font-size:17px;color:#c8c8c8;">媒体开始</div>
<div class="a" style="left:19px;top:787px;width:525px;height:1px;background:#2c2c2c;"></div>
<div class="a" style="left:19px;top:758px;width:31px;height:29px;background:#1b1b1b;"></div>
<div class="a" style="left:19px;top:817px;width:525px;height:1px;background:#2c2c2c;"></div>
<div class="a" style="left:19px;top:788px;width:31px;height:29px;background:#1b1b1b;"></div>
<div class="a" style="left:19px;top:847px;width:525px;height:1px;background:#2c2c2c;"></div>
<div class="a" style="left:19px;top:818px;width:31px;height:29px;background:#1b1b1b;"></div>
<div class="a" style="left:26px;top:764px;width:16px;height:16px;background:#f2a33a;"></div>
<div class="a" style="left:26px;top:794px;width:16px;height:16px;background:#b796ef;"></div>
<div class="a" style="left:26px;top:824px;width:16px;height:16px;background:#2ed196;"></div>
<svg class="a" style="left:63px;top:767px;" width="8" height="12" viewBox="0 0 8 12"><path d="M1.5 1L6 5.5L1.5 10" fill="none" stroke="#a8a8a8" stroke-width="1.3"/></svg>
<svg class="a" style="left:86px;top:765px;" width="19" height="15" viewBox="0 0 19 15"><rect x="0" y="2.5" width="18.5" height="12.5" fill="#b0b0b0"/><rect x="0" y="0.5" width="8" height="2.5" fill="#b0b0b0"/></svg>
<div class="t" style="left:116px;top:765px;font-size:17px;color:#bdbdbd;">照片</div>
<svg class="a" style="left:88px;top:795px;" width="16" height="17" viewBox="0 0 16 17"><rect x="0" y="0" width="16" height="17" fill="#b796ef"/><rect x="3" y="3" width="10" height="11" fill="#1d1d1d"/><rect x="5" y="8" width="6" height="1.5" fill="#b796ef"/><rect x="0.5" y="2" width="1.5" height="1.5" fill="#1d1d1d"/><rect x="14" y="2" width="1.5" height="1.5" fill="#1d1d1d"/><rect x="0.5" y="13" width="1.5" height="1.5" fill="#1d1d1d"/><rect x="14" y="13" width="1.5" height="1.5" fill="#1d1d1d"/></svg>
<div class="t" style="left:116px;top:795px;font-size:17px;color:#bdbdbd;">开放式字幕</div>
<svg class="a" style="left:85px;top:824px;" width="21" height="17" viewBox="0 0 21 17"><rect x="1" y="1" width="19" height="15" fill="none" stroke="#2ed196" stroke-width="1.6"/><path d="M3 8.5H18" stroke="#2ed196" stroke-width="1.4"/><path d="M5 5V12M8 4V13M11 5.5V11.5M14 4V13M17 6V11" stroke="#2ed196" stroke-width="1.4"/></svg>
<div class="t" style="left:116px;top:825px;font-size:17px;color:#bdbdbd;">我们别时和见时不同-饭</div>
<div class="t" style="left:308px;top:796px;font-size:15px;color:#9c9c9c;transform:scaleX(0.92);transform-origin:0 0">25.00 fps</div>
<div class="t" style="left:308px;top:826px;font-size:15px;color:#9c9c9c;transform:scaleX(0.92);transform-origin:0 0">44100 Hz</div>
<div class="t" style="left:434px;top:794px;font-size:15px;color:#9c9c9c;transform:scaleX(0.88);transform-origin:0 0">00:00:00:00</div>
<div class="t" style="left:435px;top:825px;font-size:15px;color:#9c9c9c;transform:scaleX(0.93);transform-origin:0 0">00:00:00:00000</div>
<div class="a" style="left:20px;top:931px;width:92px;height:12px;background:#343434;border-radius:6px"></div>
<svg class="a" style="left:17px;top:970px;" width="20" height="20" viewBox="0 0 20 20"><path d="M17 3.5L6 14.5L3.5 12L14.5 1Z" fill="#1db924" stroke="#1db924" stroke-width="1.5"/><path d="M3.5 12L6 14.5L1.5 17Z" fill="#1a1a1a" stroke="#1db924" stroke-width="1.3"/></svg>
<svg class="a" style="left:55px;top:972px;" width="21" height="14" viewBox="0 0 21 14"><rect x="0" y="0" width="7" height="6" rx="1" fill="#2d8ceb"/><rect x="0" y="8" width="7" height="6" rx="1" fill="#2d8ceb"/><rect x="9" y="2.3" width="11" height="1.6" fill="#2d8ceb"/><rect x="9" y="10" width="11" height="1.6" fill="#2d8ceb"/></svg>
<svg class="a" style="left:96px;top:972px;" width="14" height="14" viewBox="0 0 14 14"><rect x="0" y="0" width="13" height="9" fill="#b4b4b4"/><rect x="0" y="11" width="13" height="2" fill="#b4b4b4"/></svg>
<svg class="a" style="left:129px;top:972px;" width="24" height="14" viewBox="0 0 24 14"><rect x="0" y="0" width="12" height="8" rx="1" fill="#b4b4b4"/><rect x="5" y="2.5" width="12" height="8" rx="1" fill="#b4b4b4" stroke="#232323" stroke-width="1"/><rect x="10" y="5" width="13" height="9" rx="1" fill="#b4b4b4" stroke="#232323" stroke-width="1"/></svg>
<svg class="a" style="left:166px;top:971px;" width="14" height="14" viewBox="0 0 14 14"><circle cx="7" cy="7" r="5.3" fill="none" stroke="#9a9a9a" stroke-width="2.2"/></svg>
<div class="a" style="left:182px;top:977px;width:70px;height:2px;background:#3d3d3d;"></div>
<svg class="a" style="left:276px;top:970px;" width="20" height="17" viewBox="0 0 20 17"><rect x="0" y="0.5" width="18" height="2" fill="#555"/><rect x="0" y="7" width="13" height="2" fill="#555"/><rect x="0" y="13.5" width="9" height="2" fill="#555"/></svg>
<svg class="a" style="left:309px;top:974px;" width="11" height="7" viewBox="0 0 11 7"><path d="M0.8 0.8L5.5 5.5L10.2 0.8" fill="none" stroke="#444" stroke-width="1.3"/></svg>
<svg class="a" style="left:361px;top:972px;" width="22" height="13" viewBox="0 0 22 13"><rect x="0" y="1" width="5" height="11" fill="#555"/><rect x="6" y="1" width="4" height="11" fill="#555"/><rect x="11" y="1" width="3" height="11" fill="#555"/><rect x="15" y="2" width="2" height="9" fill="#555"/><rect x="18" y="3" width="2" height="8" fill="#555"/></svg>
<svg class="a" style="left:401px;top:970px;" width="16" height="17" viewBox="0 0 16 17"><circle cx="10" cy="6" r="4.5" fill="none" stroke="#c4c4c4" stroke-width="1.7"/><path d="M7 9.5L1.5 15" stroke="#c4c4c4" stroke-width="2.4" stroke-linecap="round"/></svg>
<svg class="a" style="left:437px;top:970px;" width="20" height="16" viewBox="0 0 20 16"><rect x="0" y="2.5" width="19" height="13" fill="#b4b4b4"/><rect x="0" y="0.5" width="8" height="2.5" fill="#b4b4b4"/></svg>
<svg class="a" style="left:477px;top:970px;" width="16" height="16" viewBox="0 0 16 16"><rect x="0.5" y="0.5" width="14" height="14" rx="1.5" fill="#b4b4b4"/><path d="M-0.5 6.5L7.5 14.5V15.5H-0.5Z" fill="#232323"/><path d="M1.8 9.5L5.5 13.2H1.8Z" fill="#b4b4b4"/></svg>
<svg class="a" style="left:514px;top:968px;" width="16" height="20" viewBox="0 0 16 20"><rect x="0.5" y="3" width="15" height="1.8" fill="#4a4a4a"/><rect x="5" y="0.5" width="6" height="2.5" fill="none" stroke="#4a4a4a" stroke-width="1.2"/><path d="M2 5.5H14L13 19H3Z" fill="none" stroke="#4a4a4a" stroke-width="1.5"/><path d="M6 7.5V17M8 7.5V17M10 7.5V17" stroke="#4a4a4a" stroke-width="1"/></svg>
<div class="a" style="left:566px;top:617px;width:60px;height:385px;background:#232323;"></div>
<div class="a" style="left:579px;top:638px;width:34px;height:32px;background:#1a1a1a;border:1px solid #2a2a2a;border-radius:4px"></div>
<svg class="a" style="left:589px;top:645px;" width="16" height="20" viewBox="0 0 16 20"><path d="M1 0.5L15.5 11.5H8.5L1 19.5Z" fill="#2d8ceb"/></svg>
<svg class="a" style="left:584px;top:680px;" width="24" height="15" viewBox="0 0 24 15"><rect x="1" y="1" width="12" height="12" fill="none" stroke="#b8b8b8" stroke-width="1.6" stroke-dasharray="3 2"/><path d="M8 5H16V1.5L23 7L16 12.5V9H8Z" fill="#b8b8b8"/></svg>
<svg class="a" style="left:606px;top:693px;" width="5" height="5" viewBox="0 0 5 5"><path d="M4.5 0.5V4.5H0.5Z" fill="#9a9a9a"/></svg>
<svg class="a" style="left:583px;top:711px;" width="24" height="20" viewBox="0 0 24 20"><rect x="10.5" y="0" width="2.5" height="20" fill="#b8b8b8"/><path d="M0 10L7 4V16Z" fill="#b8b8b8"/><path d="M24 10L17 4V16Z" fill="#b8b8b8"/><rect x="5" y="8.8" width="15" height="2.4" fill="#b8b8b8"/></svg>
<svg class="a" style="left:606px;top:727px;" width="5" height="5" viewBox="0 0 5 5"><path d="M4.5 0.5V4.5H0.5Z" fill="#9a9a9a"/></svg>
<svg class="a" style="left:586px;top:745px;" width="22" height="23" viewBox="0 0 22 23"><path d="M9 1L21 13L13 21L1 9Z" fill="#b8b8b8"/><path d="M7 9L13 15" stroke="#232323" stroke-width="1.5"/><circle cx="7" cy="9" r="1.2" fill="#232323"/><circle cx="13" cy="15" r="1.2" fill="#232323"/></svg>
<svg class="a" style="left:582px;top:780px;" width="27" height="21" viewBox="0 0 27 21"><rect x="0.5" y="0" width="2.5" height="21" fill="#b8b8b8"/><rect x="24" y="0" width="2.5" height="21" fill="#b8b8b8"/><path d="M5 10.5L10 6.5V14.5Z M22 10.5L17 6.5V14.5Z" fill="#b8b8b8"/><rect x="8" y="9.5" width="11" height="2" fill="#b8b8b8"/></svg>
<svg class="a" style="left:606px;top:796px;" width="5" height="5" viewBox="0 0 5 5"><path d="M4.5 0.5V4.5H0.5Z" fill="#9a9a9a"/></svg>
<svg class="a" style="left:586px;top:814px;" width="22" height="19" viewBox="0 0 22 19"><path d="M3 17L1 19L4.5 14L7.5 4.5L14 1.5L20 7.5L17 14L7.5 17Z" fill="#b8b8b8"/><path d="M3.5 17L9 11.5" stroke="#232323" stroke-width="1.2"/><circle cx="10" cy="10.5" r="1.5" fill="#232323"/></svg>
<svg class="a" style="left:606px;top:829px;" width="5" height="5" viewBox="0 0 5 5"><path d="M4.5 0.5V4.5H0.5Z" fill="#9a9a9a"/></svg>
<svg class="a" style="left:586px;top:846px;" width="22" height="22" viewBox="0 0 22 22"><path d="M6 21C3.5 18 0.5 14.5 0.8 12.5C1 11 2.8 10.8 4 12L5.5 13.5L3.5 4C3.2 2.5 5.5 1.8 6 3.3L8 9.5V1.8C8 0.2 10.5 0.2 10.5 1.8V9.5L12.3 2.5C12.7 1 15 1.5 14.7 3L13.5 10L16.5 5C17.3 3.8 19.3 4.5 18.7 6L15.5 14C14.5 17 13.5 19 12.5 21Z" fill="#b8b8b8"/></svg>
<svg class="a" style="left:606px;top:863px;" width="5" height="5" viewBox="0 0 5 5"><path d="M4.5 0.5V4.5H0.5Z" fill="#9a9a9a"/></svg>
<svg class="a" style="left:585px;top:882px;" width="21" height="21" viewBox="0 0 21 21"><path d="M1 1H20V6H18.5C18 3.5 17 3 14.5 3H12V18H15.5V20H5.5V18H9V3H6.5C4 3 3 3.5 2.5 6H1Z" fill="#b8b8b8"/></svg>
<svg class="a" style="left:606px;top:897px;" width="5" height="5" viewBox="0 0 5 5"><path d="M4.5 0.5V4.5H0.5Z" fill="#9a9a9a"/></svg>
<div class="a" style="left:632px;top:617px;width:1175px;height:385px;background:#232323;"></div>
<div class="t" style="left:645px;top:630px;font-size:13px;color:#a0a0a0;">×</div>
<div class="t" style="left:665px;top:626px;font-size:17px;color:#c8c8c8;">序列 <span style="font-size:15.5px;letter-spacing:-1px">01</span></div>
<svg class="a" style="left:734px;top:629px;" width="11" height="11" viewBox="0 0 11 11"><rect x="0" y="0" width="11" height="1.6" fill="#bdbdbd"/><rect x="0" y="4.2" width="11" height="1.6" fill="#bdbdbd"/><rect x="0" y="8.4" width="11" height="1.6" fill="#bdbdbd"/></svg>
<div class="t" style="left:654px;top:660px;font-size:20.5px;color:#2d8ceb;font-weight:bold;transform:scaleX(0.92);transform-origin:0 0">00:00:00:00</div>
<div class="a" style="left:649px;top:684px;width:40px;height:24px;background:#1a1a1a;border:1px solid #2a2a2a;border-radius:3px"></div>
<svg class="a" style="left:659px;top:689px;" width="19" height="16" viewBox="0 0 19 16"><path d="M9.5 0V6M3 5H8M11 5H16M3 10H8M11 10H16M5 15H9.5M9.5 15H14" stroke="#2d8ceb" stroke-width="2"/><path d="M2 1L17 15.5" stroke="#2d8ceb" stroke-width="1.6"/><rect x="8" y="0" width="3" height="3" fill="#2d8ceb"/></svg>
<svg class="a" style="left:703px;top:689px;" width="18" height="17" viewBox="0 0 18 17"><path d="M3 17V8.5A6 6 0 0 1 15 8.5V17" fill="none" stroke="#2d8ceb" stroke-width="3.6"/><rect x="1.2" y="13" width="3.6" height="4" fill="#1d5a9a"/><rect x="13.2" y="13" width="3.6" height="4" fill="#1d5a9a"/></svg>
<svg class="a" style="left:744px;top:688px;" width="19" height="19" viewBox="0 0 19 19"><rect x="0.5" y="1" width="5" height="6" fill="#2d8ceb"/><path d="M5 9.5H1V14.5H5" fill="none" stroke="#2d8ceb" stroke-width="1.4"/><path d="M7.5 1H18V11.5L9 18V1Z" fill="#2d8ceb"/><path d="M8 1.5L14 8" stroke="#232323" stroke-width="1.2"/></svg>
<svg class="a" style="left:792px;top:690px;" width="10" height="13" viewBox="0 0 10 13"><path d="M0.5 0.5H9.5V8L5 12L0.5 8Z" fill="#b4b4b4"/></svg>
<svg class="a" style="left:830px;top:688px;" width="19" height="19" viewBox="0 0 19 19"><path d="M15.5 15.5L8.5 8.5" stroke="#b8b8b8" stroke-width="4" stroke-linecap="round"/><path d="M10.5 6.5A5 5 0 0 0 4 0.8L7.2 4L4 7.2L0.8 4A5 5 0 0 0 6.5 10.5Z" fill="#b8b8b8"/></svg>
<div class="a" style="left:632px;top:708px;width:16px;height:1px;background:#121212;"></div>
<div class="a" style="left:632px;top:743px;width:1145px;height:1px;background:#303030;"></div>
<div class="a" style="left:632px;top:774px;width:1145px;height:1px;background:#303030;"></div>
<div class="a" style="left:632px;top:807px;width:1145px;height:1px;background:#303030;"></div>
<div class="a" style="left:632px;top:842px;width:1145px;height:1px;background:#303030;"></div>
<div class="a" style="left:632px;top:873px;width:1145px;height:1px;background:#303030;"></div>
<div class="a" style="left:632px;top:904px;width:1145px;height:1px;background:#303030;"></div>
<div class="a" style="left:632px;top:936px;width:1145px;height:1px;background:#303030;"></div>
<div class="a" style="left:632px;top:837px;width:1145px;height:1px;background:#303030;"></div>
<div class="a" style="left:632px;top:967px;width:1145px;height:1px;background:#303030;"></div>
<div class="a" style="left:928px;top:838px;width:849px;height:4px;background:#1d1d1d;"></div>
<svg class="a" style="left:695px;top:752px;" width="13" height="15" viewBox="0 0 13 15"><path d="M3 7V4.5A3.5 3.5 0 0 1 10 4.5" fill="none" stroke="#b4b4b4" stroke-width="1.8"/><rect x="1" y="7" width="11" height="7.5" fill="#b4b4b4"/><rect x="5.5" y="9.5" width="2" height="3" fill="#232323"/></svg>
<div class="t" style="left:724px;top:754.5px;font-size:12px;color:#a0a0a0;">V3</div>
<div class="a" style="left:753px;top:744px;width:66px;height:30px;background:#262626;"></div>
<svg class="a" style="left:763px;top:752px;" width="17" height="14" viewBox="0 0 17 14"><rect x="1" y="1.5" width="9" height="4" fill="none" stroke="#b4b4b4" stroke-width="1.6"/><rect x="1" y="8.5" width="9" height="4" fill="none" stroke="#b4b4b4" stroke-width="1.6"/><path d="M10 3.5H16M10 10.5H16M13.5 3.5V10.5" fill="none" stroke="#b4b4b4" stroke-width="1.6"/></svg>
<svg class="a" style="left:795px;top:753px;" width="18" height="12" viewBox="0 0 18 12"><path d="M1 6C4 1 14 1 17 6C14 11 4 11 1 6Z" fill="#b4b4b4"/><circle cx="9" cy="6" r="3" fill="#232323"/><circle cx="9" cy="6" r="1.6" fill="#b4b4b4"/></svg>
<svg class="a" style="left:695px;top:783px;" width="13" height="15" viewBox="0 0 13 15"><path d="M3 7V4.5A3.5 3.5 0 0 1 10 4.5" fill="none" stroke="#b4b4b4" stroke-width="1.8"/><rect x="1" y="7" width="11" height="7.5" fill="#b4b4b4"/><rect x="5.5" y="9.5" width="2" height="3" fill="#232323"/></svg>
<div class="t" style="left:724px;top:785.5px;font-size:12px;color:#a0a0a0;">V2</div>
<div class="a" style="left:753px;top:775px;width:66px;height:32px;background:#262626;"></div>
<svg class="a" style="left:763px;top:783px;" width="17" height="14" viewBox="0 0 17 14"><rect x="1" y="1.5" width="9" height="4" fill="none" stroke="#b4b4b4" stroke-width="1.6"/><rect x="1" y="8.5" width="9" height="4" fill="none" stroke="#b4b4b4" stroke-width="1.6"/><path d="M10 3.5H16M10 10.5H16M13.5 3.5V10.5" fill="none" stroke="#b4b4b4" stroke-width="1.6"/></svg>
<svg class="a" style="left:795px;top:784px;" width="18" height="12" viewBox="0 0 18 12"><path d="M1 6C4 1 14 1 17 6C14 11 4 11 1 6Z" fill="#b4b4b4"/><circle cx="9" cy="6" r="3" fill="#232323"/><circle cx="9" cy="6" r="1.6" fill="#b4b4b4"/></svg>
<svg class="a" style="left:695px;top:816px;" width="13" height="15" viewBox="0 0 13 15"><path d="M3 7V4.5A3.5 3.5 0 0 1 10 4.5" fill="none" stroke="#b4b4b4" stroke-width="1.8"/><rect x="1" y="7" width="11" height="7.5" fill="#b4b4b4"/><rect x="5.5" y="9.5" width="2" height="3" fill="#232323"/></svg>
<div class="a" style="left:713px;top:807px;width:40px;height:30px;background:#125285;"></div>
<div class="t" style="left:724px;top:818.5px;font-size:12px;color:#c4d8ea;">V1</div>
<div class="a" style="left:753px;top:808px;width:66px;height:29px;background:#262626;"></div>
<svg class="a" style="left:763px;top:816px;" width="17" height="14" viewBox="0 0 17 14"><rect x="1" y="1.5" width="9" height="4" fill="none" stroke="#b4b4b4" stroke-width="1.6"/><rect x="1" y="8.5" width="9" height="4" fill="none" stroke="#b4b4b4" stroke-width="1.6"/><path d="M10 3.5H16M10 10.5H16M13.5 3.5V10.5" fill="none" stroke="#b4b4b4" stroke-width="1.6"/></svg>
<svg class="a" style="left:795px;top:817px;" width="18" height="12" viewBox="0 0 18 12"><path d="M1 6C4 1 14 1 17 6C14 11 4 11 1 6Z" fill="#b4b4b4"/><circle cx="9" cy="6" r="3" fill="#232323"/><circle cx="9" cy="6" r="1.6" fill="#b4b4b4"/></svg>
<svg class="a" style="left:695px;top:851px;" width="13" height="15" viewBox="0 0 13 15"><path d="M3 7V4.5A3.5 3.5 0 0 1 10 4.5" fill="none" stroke="#b4b4b4" stroke-width="1.8"/><rect x="1" y="7" width="11" height="7.5" fill="#b4b4b4"/><rect x="5.5" y="9.5" width="2" height="3" fill="#232323"/></svg>
<div class="a" style="left:713px;top:843px;width:40px;height:30px;background:#125285;"></div>
<div class="t" style="left:723px;top:853.5px;font-size:12px;color:#c4d8ea;">A1</div>
<div class="a" style="left:753px;top:843px;width:34px;height:30px;background:#262626;"></div>
<svg class="a" style="left:763px;top:851px;" width="17" height="14" viewBox="0 0 17 14"><rect x="1" y="1.5" width="9" height="4" fill="none" stroke="#b4b4b4" stroke-width="1.6"/><rect x="1" y="8.5" width="9" height="4" fill="none" stroke="#b4b4b4" stroke-width="1.6"/><path d="M10 3.5H16M10 10.5H16M13.5 3.5V10.5" fill="none" stroke="#b4b4b4" stroke-width="1.6"/></svg>
<div class="t" style="left:798px;top:853px;font-size:13px;color:#a8a8a8;">M</div>
<div class="t" style="left:834px;top:853px;font-size:13px;color:#a8a8a8;">S</div>
<svg class="a" style="left:865px;top:850px;" width="14" height="19" viewBox="0 0 14 19"><rect x="4" y="0.5" width="6" height="11" rx="3" fill="#b4b4b4"/><path d="M1.5 8V9A5.5 5.5 0 0 0 12.5 9V8" fill="none" stroke="#b4b4b4" stroke-width="1.5"/><rect x="6.3" y="14" width="1.5" height="3" fill="#b4b4b4"/><rect x="3" y="17" width="8" height="1.5" fill="#b4b4b4"/></svg>
<svg class="a" style="left:695px;top:882px;" width="13" height="15" viewBox="0 0 13 15"><path d="M3 7V4.5A3.5 3.5 0 0 1 10 4.5" fill="none" stroke="#b4b4b4" stroke-width="1.8"/><rect x="1" y="7" width="11" height="7.5" fill="#b4b4b4"/><rect x="5.5" y="9.5" width="2" height="3" fill="#232323"/></svg>
<div class="a" style="left:713px;top:874px;width:40px;height:30px;background:#125285;"></div>
<div class="t" style="left:723px;top:884.5px;font-size:12px;color:#c4d8ea;">A2</div>
<div class="a" style="left:753px;top:874px;width:34px;height:30px;background:#262626;"></div>
<svg class="a" style="left:763px;top:882px;" width="17" height="14" viewBox="0 0 17 14"><rect x="1" y="1.5" width="9" height="4" fill="none" stroke="#b4b4b4" stroke-width="1.6"/><rect x="1" y="8.5" width="9" height="4" fill="none" stroke="#b4b4b4" stroke-width="1.6"/><path d="M10 3.5H16M10 10.5H16M13.5 3.5V10.5" fill="none" stroke="#b4b4b4" stroke-width="1.6"/></svg>
<div class="t" style="left:798px;top:884px;font-size:13px;color:#a8a8a8;">M</div>
<div class="t" style="left:834px;top:884px;font-size:13px;color:#a8a8a8;">S</div>
<svg class="a" style="left:865px;top:881px;" width="14" height="19" viewBox="0 0 14 19"><rect x="4" y="0.5" width="6" height="11" rx="3" fill="#b4b4b4"/><path d="M1.5 8V9A5.5 5.5 0 0 0 12.5 9V8" fill="none" stroke="#b4b4b4" stroke-width="1.5"/><rect x="6.3" y="14" width="1.5" height="3" fill="#b4b4b4"/><rect x="3" y="17" width="8" height="1.5" fill="#b4b4b4"/></svg>
<svg class="a" style="left:695px;top:913px;" width="13" height="15" viewBox="0 0 13 15"><path d="M3 7V4.5A3.5 3.5 0 0 1 10 4.5" fill="none" stroke="#b4b4b4" stroke-width="1.8"/><rect x="1" y="7" width="11" height="7.5" fill="#b4b4b4"/><rect x="5.5" y="9.5" width="2" height="3" fill="#232323"/></svg>
<div class="a" style="left:713px;top:905px;width:40px;height:31px;background:#125285;"></div>
<div class="t" style="left:723px;top:915.5px;font-size:12px;color:#c4d8ea;">A3</div>
<div class="a" style="left:753px;top:905px;width:34px;height:31px;background:#262626;"></div>
<svg class="a" style="left:763px;top:913px;" width="17" height="14" viewBox="0 0 17 14"><rect x="1" y="1.5" width="9" height="4" fill="none" stroke="#b4b4b4" stroke-width="1.6"/><rect x="1" y="8.5" width="9" height="4" fill="none" stroke="#b4b4b4" stroke-width="1.6"/><path d="M10 3.5H16M10 10.5H16M13.5 3.5V10.5" fill="none" stroke="#b4b4b4" stroke-width="1.6"/></svg>
<div class="t" style="left:798px;top:915px;font-size:13px;color:#a8a8a8;">M</div>
<div class="t" style="left:834px;top:915px;font-size:13px;color:#a8a8a8;">S</div>
<svg class="a" style="left:865px;top:912px;" width="14" height="19" viewBox="0 0 14 19"><rect x="4" y="0.5" width="6" height="11" rx="3" fill="#b4b4b4"/><path d="M1.5 8V9A5.5 5.5 0 0 0 12.5 9V8" fill="none" stroke="#b4b4b4" stroke-width="1.5"/><rect x="6.3" y="14" width="1.5" height="3" fill="#b4b4b4"/><rect x="3" y="17" width="8" height="1.5" fill="#b4b4b4"/></svg>
<svg class="a" style="left:695px;top:945px;" width="13" height="15" viewBox="0 0 13 15"><path d="M3 7V4.5A3.5 3.5 0 0 1 10 4.5" fill="none" stroke="#b4b4b4" stroke-width="1.8"/><rect x="1" y="7" width="11" height="7.5" fill="#b4b4b4"/><rect x="5.5" y="9.5" width="2" height="3" fill="#232323"/></svg>
<div class="t" style="left:716px;top:942px;font-size:17px;color:#9c9c9c;">主声道</div>
<div class="t" style="left:812px;top:944px;font-size:14px;color:#2d8ceb;">0.0</div>
<svg class="a" style="left:903px;top:940px;" width="16" height="14" viewBox="0 0 16 14"><path d="M0.5 0.5L7.3 7L0.5 13.5Z M15.5 0.5L8.7 7L15.5 13.5Z" fill="#b4b4b4"/></svg>
<div class="t" style="left:928px;top:673px;font-size:14px;color:#a8a8a8;transform:scaleX(0.97);transform-origin:0 0">:00:00</div>
<div class="t" style="left:1040px;top:673px;font-size:14px;color:#a8a8a8;transform:scaleX(0.97);transform-origin:0 0">00:00:15:00</div>
<div class="t" style="left:1187px;top:673px;font-size:14px;color:#a8a8a8;transform:scaleX(0.97);transform-origin:0 0">00:00:30:00</div>
<div class="t" style="left:1333px;top:673px;font-size:14px;color:#a8a8a8;transform:scaleX(0.97);transform-origin:0 0">00:00:45:00</div>
<div class="t" style="left:1479px;top:673px;font-size:14px;color:#a8a8a8;transform:scaleX(0.97);transform-origin:0 0">00:01:00:00</div>
<div class="t" style="left:1625px;top:673px;font-size:14px;color:#a8a8a8;transform:scaleX(0.97);transform-origin:0 0">00:01:15:00</div>
<div class="t" style="left:1772px;top:673px;font-size:14px;color:#a8a8a8;transform:scaleX(0.97);transform-origin:0 0;clip-path:inset(0 calc(100% - 5px) 0 0)">00:01:30:00</div>
<svg class="a" style="left:928px;top:692px;" width="849" height="14" viewBox="0 0 849 14"><rect x="0" y="0" width="1" height="14" fill="#6a6a6a"/><rect x="10" y="8" width="1" height="6" fill="#6a6a6a"/><rect x="20" y="8" width="1" height="6" fill="#6a6a6a"/><rect x="30" y="8" width="1" height="6" fill="#6a6a6a"/><rect x="39" y="8" width="1" height="6" fill="#6a6a6a"/><rect x="49" y="8" width="1" height="6" fill="#6a6a6a"/><rect x="59" y="8" width="1" height="6" fill="#6a6a6a"/><rect x="69" y="8" width="1" height="6" fill="#6a6a6a"/><rect x="78" y="8" width="1" height="6" fill="#6a6a6a"/><rect x="88" y="8" width="1" height="6" fill="#6a6a6a"/><rect x="98" y="8" width="1" height="6" fill="#6a6a6a"/><rect x="108" y="8" width="1" height="6" fill="#6a6a6a"/><rect x="117" y="8" width="1" height="6" fill="#6a6a6a"/><rect x="127" y="8" width="1" height="6" fill="#6a6a6a"/><rect x="137" y="8" width="1" height="6" fill="#6a6a6a"/><rect x="147" y="0" width="1" height="14" fill="#6a6a6a"/><rect x="156" y="8" width="1" height="6" fill="#6a6a6a"/><rect x="166" y="8" width="1" height="6" fill="#6a6a6a"/><rect x="176" y="8" width="1" height="6" fill="#6a6a6a"/><rect x="186" y="8" width="1" height="6" fill="#6a6a6a"/><rect x="195" y="8" width="1" height="6" fill="#6a6a6a"/><rect x="205" y="8" width="1" height="6" fill="#6a6a6a"/><rect x="215" y="8" width="1" height="6" fill="#6a6a6a"/><rect x="225" y="8" width="1" height="6" fill="#6a6a6a"/><rect x="234" y="8" width="1" height="6" fill="#6a6a6a"/><rect x="244" y="8" width="1" height="6" fill="#6a6a6a"/><rect x="254" y="8" width="1" height="6" fill="#6a6a6a"/><rect x="264" y="8" width="1" height="6" fill="#6a6a6a"/><rect x="273" y="8" width="1" height="6" fill="#6a6a6a"/><rect x="283" y="8" width="1" height="6" fill="#6a6a6a"/><rect x="293" y="0" width="1" height="14" fill="#6a6a6a"/><rect x="303" y="8" width="1" height="6" fill="#6a6a6a"/><rect x="312" y="8" width="1" height="6" fill="#6a6a6a"/><rect x="322" y="8" width="1" height="6" fill="#6a6a6a"/><rect x="332" y="8" width="1" height="6" fill="#6a6a6a"/><rect x="342" y="8" width="1" height="6" fill="#6a6a6a"/><rect x="351" y="8" width="1" height="6" fill="#6a6a6a"/><rect x="361" y="8" width="1" height="6" fill="#6a6a6a"/><rect x="371" y="8" width="1" height="6" fill="#6a6a6a"/><rect x="381" y="8" width="1" height="6" fill="#6a6a6a"/><rect x="390" y="8" width="1" height="6" fill="#6a6a6a"/><rect x="400" y="8" width="1" height="6" fill="#6a6a6a"/><rect x="410" y="8" width="1" height="6" fill="#6a6a6a"/><rect x="420" y="8" width="1" height="6" fill="#6a6a6a"/><rect x="429" y="8" width="1" height="6" fill="#6a6a6a"/><rect x="439" y="0" width="1" height="14" fill="#6a6a6a"/><rect x="449" y="8" width="1" height="6" fill="#6a6a6a"/><rect x="459" y="8" width="1" height="6" fill="#6a6a6a"/><rect x="468" y="8" width="1" height="6" fill="#6a6a6a"/><rect x="478" y="8" width="1" height="6" fill="#6a6a6a"/><rect x="488" y="8" width="1" height="6" fill="#6a6a6a"/><rect x="497" y="8" width="1" height="6" fill="#6a6a6a"/><rect x="507" y="8" width="1" height="6" fill="#6a6a6a"/><rect x="517" y="8" width="1" height="6" fill="#6a6a6a"/><rect x="527" y="8" width="1" height="6" fill="#6a6a6a"/><rect x="536" y="8" width="1" height="6" fill="#6a6a6a"/><rect x="546" y="8" width="1" height="6" fill="#6a6a6a"/><rect x="556" y="8" width="1" height="6" fill="#6a6a6a"/><rect x="566" y="8" width="1" height="6" fill="#6a6a6a"/><rect x="575" y="8" width="1" height="6" fill="#6a6a6a"/><rect x="585" y="0" width="1" height="14" fill="#6a6a6a"/><rect x="595" y="8" width="1" height="6" fill="#6a6a6a"/><rect x="605" y="8" width="1" height="6" fill="#6a6a6a"/><rect x="614" y="8" width="1" height="6" fill="#6a6a6a"/><rect x="624" y="8" width="1" height="6" fill="#6a6a6a"/><rect x="634" y="8" width="1" height="6" fill="#6a6a6a"/><rect x="644" y="8" width="1" height="6" fill="#6a6a6a"/><rect x="653" y="8" width="1" height="6" fill="#6a6a6a"/><rect x="663" y="8" width="1" height="6" fill="#6a6a6a"/><rect x="673" y="8" width="1" height="6" fill="#6a6a6a"/><rect x="683" y="8" width="1" height="6" fill="#6a6a6a"/><rect x="692" y="8" width="1" height="6" fill="#6a6a6a"/><rect x="702" y="8" width="1" height="6" fill="#6a6a6a"/><rect x="712" y="8" width="1" height="6" fill="#6a6a6a"/><rect x="722" y="8" width="1" height="6" fill="#6a6a6a"/><rect x="731" y="0" width="1" height="14" fill="#6a6a6a"/><rect x="741" y="8" width="1" height="6" fill="#6a6a6a"/><rect x="751" y="8" width="1" height="6" fill="#6a6a6a"/><rect x="761" y="8" width="1" height="6" fill="#6a6a6a"/><rect x="770" y="8" width="1" height="6" fill="#6a6a6a"/><rect x="780" y="8" width="1" height="6" fill="#6a6a6a"/><rect x="790" y="8" width="1" height="6" fill="#6a6a6a"/><rect x="800" y="8" width="1" height="6" fill="#6a6a6a"/><rect x="809" y="8" width="1" height="6" fill="#6a6a6a"/><rect x="819" y="8" width="1" height="6" fill="#6a6a6a"/><rect x="829" y="8" width="1" height="6" fill="#6a6a6a"/><rect x="839" y="8" width="1" height="6" fill="#6a6a6a"/><rect x="848" y="8" width="1" height="6" fill="#6a6a6a"/></svg>
<div class="a" style="left:928px;top:706px;width:849px;height:1px;background:#1d1d1d;"></div>
<div class="a" style="left:931px;top:706px;width:367px;height:3px;background:#e8e80a;"></div>
<div class="a" style="left:930px;top:807px;width:27px;height:30px;background:#c2c2c2;"></div>
<svg class="a" style="left:930px;top:807px;" width="27" height="30" viewBox="0 0 27 30"><path d="M0 0H26V15H20V15L17 18H8L5 15H0Z" fill="#a78fe0"/><path d="M0 7L6 0" stroke="#e0e0e0" stroke-width="1.2"/><rect x="5" y="15" width="16" height="15" fill="#000"/><path d="M19 8H26V15L20 21Z" fill="#a88a4c"/><path d="M4 14L8 18M21 14L17 18" stroke="#4a4a6a" stroke-width="1"/></svg>
<div class="a" style="left:957px;top:807px;width:48.5px;height:30px;background:#8a4545;"></div>
<div class="a" style="left:957px;top:807px;width:32px;height:20px;background:#e485e6;"></div>
<div class="a" style="left:970px;top:811px;width:17px;height:14px;background:#6e6e6e;border:1px solid #a4a4a4"></div>
<div class="t" style="left:973px;top:812px;font-size:12px;color:#1e1e1e;font-family:&quot;Liberation Serif&quot;,serif"><i>fx</i></div>
<div class="a" style="left:1005.5px;top:807px;width:48.5px;height:30px;background:#8a4545;"></div>
<div class="a" style="left:1010.5px;top:807px;width:32px;height:20px;background:#e485e6;"></div>
<div class="a" style="left:1023.5px;top:811px;width:17px;height:14px;background:#6e6e6e;border:1px solid #a4a4a4"></div>
<div class="t" style="left:1026.5px;top:812px;font-size:12px;color:#1e1e1e;font-family:&quot;Liberation Serif&quot;,serif"><i>fx</i></div>
<div class="a" style="left:1054px;top:807px;width:49px;height:30px;background:#8a4545;"></div>
<div class="a" style="left:1060px;top:807px;width:32px;height:20px;background:#e485e6;"></div>
<div class="a" style="left:1073px;top:811px;width:17px;height:14px;background:#6e6e6e;border:1px solid #a4a4a4"></div>
<div class="t" style="left:1076px;top:812px;font-size:12px;color:#1e1e1e;font-family:&quot;Liberation Serif&quot;,serif"><i>fx</i></div>
<div class="a" style="left:1103px;top:807px;width:49px;height:30px;background:#8a4545;"></div>
<div class="a" style="left:1108px;top:807px;width:32px;height:20px;background:#e485e6;"></div>
<div class="a" style="left:1121px;top:811px;width:17px;height:14px;background:#6e6e6e;border:1px solid #a4a4a4"></div>
<div class="t" style="left:1124px;top:812px;font-size:12px;color:#1e1e1e;font-family:&quot;Liberation Serif&quot;,serif"><i>fx</i></div>
<div class="a" style="left:1152px;top:807px;width:48.5px;height:30px;background:#8a4545;"></div>
<div class="a" style="left:1157px;top:807px;width:32px;height:20px;background:#e485e6;"></div>
<div class="a" style="left:1170px;top:811px;width:17px;height:14px;background:#6e6e6e;border:1px solid #a4a4a4"></div>
<div class="t" style="left:1173px;top:812px;font-size:12px;color:#1e1e1e;font-family:&quot;Liberation Serif&quot;,serif"><i>fx</i></div>
<div class="a" style="left:1200.5px;top:807px;width:48.5px;height:30px;background:#8a4545;"></div>
<div class="a" style="left:1210.5px;top:807px;width:32px;height:20px;background:#e485e6;"></div>
<div class="a" style="left:1223.5px;top:811px;width:17px;height:14px;background:#6e6e6e;border:1px solid #a4a4a4"></div>
<div class="t" style="left:1226.5px;top:812px;font-size:12px;color:#1e1e1e;font-family:&quot;Liberation Serif&quot;,serif"><i>fx</i></div>
<div class="a" style="left:1249px;top:807px;width:48px;height:30px;background:#8a4545;"></div>
<div class="a" style="left:1255px;top:807px;width:32px;height:20px;background:#e485e6;"></div>
<div class="a" style="left:1268px;top:811px;width:17px;height:14px;background:#6e6e6e;border:1px solid #a4a4a4"></div>
<div class="t" style="left:1271px;top:812px;font-size:12px;color:#1e1e1e;font-family:&quot;Liberation Serif&quot;,serif"><i>fx</i></div>
<div class="a" style="left:1005.5px;top:807px;width:1px;height:30px;background:#2a2a2a;"></div>
<div class="a" style="left:1006.5px;top:807px;width:1px;height:30px;background:#c89a9a;"></div>
<div class="a" style="left:1054px;top:807px;width:1px;height:30px;background:#2a2a2a;"></div>
<div class="a" style="left:1055px;top:807px;width:1px;height:30px;background:#c89a9a;"></div>
<div class="a" style="left:1103px;top:807px;width:1px;height:30px;background:#2a2a2a;"></div>
<div class="a" style="left:1104px;top:807px;width:1px;height:30px;background:#c89a9a;"></div>
<div class="a" style="left:1152px;top:807px;width:1px;height:30px;background:#2a2a2a;"></div>
<div class="a" style="left:1153px;top:807px;width:1px;height:30px;background:#c89a9a;"></div>
<div class="a" style="left:1200.5px;top:807px;width:1px;height:30px;background:#2a2a2a;"></div>
<div class="a" style="left:1201.5px;top:807px;width:1px;height:30px;background:#c89a9a;"></div>
<div class="a" style="left:1249px;top:807px;width:1px;height:30px;background:#2a2a2a;"></div>
<div class="a" style="left:1250px;top:807px;width:1px;height:30px;background:#c89a9a;"></div>
<div class="a" style="left:1001px;top:814px;width:10px;height:18px;background:#b09050;border:1px solid #5a5a80"></div>
<svg class="a" style="left:1002px;top:815px;" width="8" height="16" viewBox="0 0 8 16"><path d="M1 15L7 8" stroke="#e8d8a8" stroke-width="0.8"/><path d="M2.5 3.5H7L2.5 8.5H7" fill="none" stroke="#111" stroke-width="1.4"/></svg>
<div class="a" style="left:1050px;top:814px;width:10px;height:18px;background:#b09050;border:1px solid #5a5a80"></div>
<svg class="a" style="left:1051px;top:815px;" width="8" height="16" viewBox="0 0 8 16"><path d="M1 15L7 8" stroke="#e8d8a8" stroke-width="0.8"/><path d="M2.5 3.5H7L2.5 8.5H7" fill="none" stroke="#111" stroke-width="1.4"/></svg>
<div class="a" style="left:1099px;top:814px;width:10px;height:18px;background:#b09050;border:1px solid #5a5a80"></div>
<svg class="a" style="left:1100px;top:815px;" width="8" height="16" viewBox="0 0 8 16"><path d="M1 15L7 8" stroke="#e8d8a8" stroke-width="0.8"/><path d="M2.5 3.5H7L2.5 8.5H7" fill="none" stroke="#111" stroke-width="1.4"/></svg>
<div class="a" style="left:1147px;top:814px;width:10px;height:18px;background:#b09050;border:1px solid #5a5a80"></div>
<svg class="a" style="left:1148px;top:815px;" width="8" height="16" viewBox="0 0 8 16"><path d="M1 15L7 8" stroke="#e8d8a8" stroke-width="0.8"/><path d="M2.5 3.5H7L2.5 8.5H7" fill="none" stroke="#111" stroke-width="1.4"/></svg>
<div class="a" style="left:1201px;top:814px;width:10px;height:18px;background:#b09050;border:1px solid #5a5a80"></div>
<svg class="a" style="left:1202px;top:815px;" width="8" height="16" viewBox="0 0 8 16"><path d="M1 15L7 8" stroke="#e8d8a8" stroke-width="0.8"/><path d="M2.5 3.5H7L2.5 8.5H7" fill="none" stroke="#111" stroke-width="1.4"/></svg>
<div class="a" style="left:1245px;top:814px;width:10px;height:18px;background:#b09050;border:1px solid #5a5a80"></div>
<svg class="a" style="left:1246px;top:815px;" width="8" height="16" viewBox="0 0 8 16"><path d="M1 15L7 8" stroke="#e8d8a8" stroke-width="0.8"/><path d="M2.5 3.5H7L2.5 8.5H7" fill="none" stroke="#111" stroke-width="1.4"/></svg>
<div class="a" style="left:930px;top:843px;width:400px;height:30px;background:#1b6b4e;"></div>
<svg class="a" style="left:930px;top:843px;" width="400" height="30" viewBox="0 0 400 30"><rect x="0" y="4" width="1" height="11" fill="#2cd696"/><rect x="0" y="20" width="1" height="10" fill="#2cd696"/><rect x="1" y="5" width="1" height="10" fill="#2cd696"/><rect x="1" y="19" width="1" height="11" fill="#2cd696"/><rect x="2" y="4" width="1" height="11" fill="#2cd696"/><rect x="2" y="20" width="1" height="10" fill="#2cd696"/><rect x="3" y="5" width="1" height="10" fill="#2cd696"/><rect x="3" y="21" width="1" height="9" fill="#2cd696"/><rect x="4" y="5" width="1" height="10" fill="#2cd696"/><rect x="4" y="19" width="1" height="11" fill="#2cd696"/><rect x="5" y="5" width="1" height="10" fill="#2cd696"/><rect x="5" y="19" width="1" height="11" fill="#2cd696"/><rect x="6" y="7" width="1" height="8" fill="#2cd696"/><rect x="6" y="20" width="1" height="10" fill="#2cd696"/><rect x="7" y="4" width="1" height="11" fill="#2cd696"/><rect x="7" y="20" width="1" height="10" fill="#2cd696"/><rect x="8" y="4" width="1" height="11" fill="#2cd696"/><rect x="8" y="19" width="1" height="11" fill="#2cd696"/><rect x="9" y="6" width="1" height="9" fill="#2cd696"/><rect x="9" y="20" width="1" height="10" fill="#2cd696"/><rect x="10" y="5" width="1" height="10" fill="#2cd696"/><rect x="10" y="22" width="1" height="8" fill="#2cd696"/><rect x="11" y="5" width="1" height="10" fill="#2cd696"/><rect x="11" y="20" width="1" height="10" fill="#2cd696"/><rect x="12" y="5" width="1" height="10" fill="#2cd696"/><rect x="12" y="21" width="1" height="9" fill="#2cd696"/><rect x="13" y="7" width="1" height="8" fill="#2cd696"/><rect x="13" y="19" width="1" height="11" fill="#2cd696"/><rect x="14" y="4" width="1" height="11" fill="#2cd696"/><rect x="14" y="21" width="1" height="9" fill="#2cd696"/><rect x="15" y="4" width="1" height="11" fill="#2cd696"/><rect x="15" y="22" width="1" height="8" fill="#2cd696"/><rect x="16" y="5" width="1" height="10" fill="#2cd696"/><rect x="16" y="20" width="1" height="10" fill="#2cd696"/><rect x="17" y="6" width="1" height="9" fill="#2cd696"/><rect x="17" y="19" width="1" height="11" fill="#2cd696"/><rect x="18" y="6" width="1" height="9" fill="#2cd696"/><rect x="18" y="22" width="1" height="8" fill="#2cd696"/><rect x="19" y="4" width="1" height="11" fill="#2cd696"/><rect x="19" y="19" width="1" height="11" fill="#2cd696"/><rect x="20" y="7" width="1" height="8" fill="#2cd696"/><rect x="20" y="20" width="1" height="10" fill="#2cd696"/><rect x="21" y="4" width="1" height="11" fill="#2cd696"/><rect x="21" y="19" width="1" height="11" fill="#2cd696"/><rect x="22" y="7" width="1" height="8" fill="#2cd696"/><rect x="22" y="19" width="1" height="11" fill="#2cd696"/><rect x="23" y="7" width="1" height="8" fill="#2cd696"/><rect x="23" y="22" width="1" height="8" fill="#2cd696"/><rect x="24" y="4" width="1" height="11" fill="#2cd696"/><rect x="24" y="20" width="1" height="10" fill="#2cd696"/><rect x="25" y="5" width="1" height="10" fill="#2cd696"/><rect x="25" y="21" width="1" height="9" fill="#2cd696"/><rect x="26" y="5" width="1" height="10" fill="#2cd696"/><rect x="26" y="21" width="1" height="9" fill="#2cd696"/><rect x="27" y="7" width="1" height="8" fill="#2cd696"/><rect x="27" y="20" width="1" height="10" fill="#2cd696"/><rect x="28" y="5" width="1" height="10" fill="#2cd696"/><rect x="28" y="21" width="1" height="9" fill="#2cd696"/><rect x="29" y="7" width="1" height="8" fill="#2cd696"/><rect x="29" y="20" width="1" height="10" fill="#2cd696"/><rect x="30" y="5" width="1" height="10" fill="#2cd696"/><rect x="30" y="19" width="1" height="11" fill="#2cd696"/><rect x="31" y="4" width="1" height="11" fill="#2cd696"/><rect x="31" y="19" width="1" height="11" fill="#2cd696"/><rect x="32" y="4" width="1" height="11" fill="#2cd696"/><rect x="32" y="19" width="1" height="11" fill="#2cd696"/><rect x="33" y="5" width="1" height="10" fill="#2cd696"/><rect x="33" y="19" width="1" height="11" fill="#2cd696"/><rect x="34" y="4" width="1" height="11" fill="#2cd696"/><rect x="34" y="21" width="1" height="9" fill="#2cd696"/><rect x="35" y="5" width="1" height="10" fill="#2cd696"/><rect x="35" y="22" width="1" height="8" fill="#2cd696"/><rect x="36" y="6" width="1" height="9" fill="#2cd696"/><rect x="36" y="22" width="1" height="8" fill="#2cd696"/><rect x="37" y="4" width="1" height="11" fill="#2cd696"/><rect x="37" y="20" width="1" height="10" fill="#2cd696"/><rect x="38" y="5" width="1" height="10" fill="#2cd696"/><rect x="38" y="22" width="1" height="8" fill="#2cd696"/><rect x="39" y="5" width="1" height="10" fill="#2cd696"/><rect x="39" y="20" width="1" height="10" fill="#2cd696"/><rect x="40" y="4" width="1" height="11" fill="#2cd696"/><rect x="40" y="20" width="1" height="10" fill="#2cd696"/><rect x="41" y="5" width="1" height="10" fill="#2cd696"/><rect x="41" y="20" width="1" height="10" fill="#2cd696"/><rect x="42" y="5" width="1" height="10" fill="#2cd696"/><rect x="42" y="19" width="1" height="11" fill="#2cd696"/><rect x="43" y="4" width="1" height="11" fill="#2cd696"/><rect x="43" y="21" width="1" height="9" fill="#2cd696"/><rect x="44" y="4" width="1" height="11" fill="#2cd696"/><rect x="44" y="22" width="1" height="8" fill="#2cd696"/><rect x="45" y="4" width="1" height="11" fill="#2cd696"/><rect x="45" y="20" width="1" height="10" fill="#2cd696"/><rect x="46" y="6" width="1" height="9" fill="#2cd696"/><rect x="46" y="21" width="1" height="9" fill="#2cd696"/><rect x="47" y="4" width="1" height="11" fill="#2cd696"/><rect x="47" y="21" width="1" height="9" fill="#2cd696"/><rect x="48" y="7" width="1" height="8" fill="#2cd696"/><rect x="48" y="19" width="1" height="11" fill="#2cd696"/><rect x="49" y="5" width="1" height="10" fill="#2cd696"/><rect x="49" y="20" width="1" height="10" fill="#2cd696"/><rect x="50" y="5" width="1" height="10" fill="#2cd696"/><rect x="50" y="19" width="1" height="11" fill="#2cd696"/><rect x="51" y="6" width="1" height="9" fill="#2cd696"/><rect x="51" y="21" width="1" height="9" fill="#2cd696"/><rect x="52" y="4" width="1" height="11" fill="#2cd696"/><rect x="52" y="21" width="1" height="9" fill="#2cd696"/><rect x="53" y="7" width="1" height="8" fill="#2cd696"/><rect x="53" y="20" width="1" height="10" fill="#2cd696"/><rect x="54" y="4" width="1" height="11" fill="#2cd696"/><rect x="54" y="19" width="1" height="11" fill="#2cd696"/><rect x="55" y="4" width="1" height="11" fill="#2cd696"/><rect x="55" y="19" width="1" height="11" fill="#2cd696"/><rect x="56" y="5" width="1" height="10" fill="#2cd696"/><rect x="56" y="22" width="1" height="8" fill="#2cd696"/><rect x="57" y="6" width="1" height="9" fill="#2cd696"/><rect x="57" y="20" width="1" height="10" fill="#2cd696"/><rect x="58" y="4" width="1" height="11" fill="#2cd696"/><rect x="58" y="19" width="1" height="11" fill="#2cd696"/><rect x="59" y="7" width="1" height="8" fill="#2cd696"/><rect x="59" y="19" width="1" height="11" fill="#2cd696"/><rect x="60" y="5" width="1" height="10" fill="#2cd696"/><rect x="60" y="19" width="1" height="11" fill="#2cd696"/><rect x="61" y="4" width="1" height="11" fill="#2cd696"/><rect x="61" y="19" width="1" height="11" fill="#2cd696"/><rect x="62" y="5" width="1" height="10" fill="#2cd696"/><rect x="62" y="22" width="1" height="8" fill="#2cd696"/><rect x="63" y="5" width="1" height="10" fill="#2cd696"/><rect x="63" y="22" width="1" height="8" fill="#2cd696"/><rect x="64" y="4" width="1" height="11" fill="#2cd696"/><rect x="64" y="19" width="1" height="11" fill="#2cd696"/><rect x="65" y="5" width="1" height="10" fill="#2cd696"/><rect x="65" y="20" width="1" height="10" fill="#2cd696"/><rect x="66" y="7" width="1" height="8" fill="#2cd696"/><rect x="66" y="19" width="1" height="11" fill="#2cd696"/><rect x="67" y="5" width="1" height="10" fill="#2cd696"/><rect x="67" y="21" width="1" height="9" fill="#2cd696"/><rect x="68" y="5" width="1" height="10" fill="#2cd696"/><rect x="68" y="19" width="1" height="11" fill="#2cd696"/><rect x="69" y="5" width="1" height="10" fill="#2cd696"/><rect x="69" y="19" width="1" height="11" fill="#2cd696"/><rect x="70" y="5" width="1" height="10" fill="#2cd696"/><rect x="70" y="19" width="1" height="11" fill="#2cd696"/><rect x="71" y="4" width="1" height="11" fill="#2cd696"/><rect x="71" y="19" width="1" height="11" fill="#2cd696"/><rect x="72" y="4" width="1" height="11" fill="#2cd696"/><rect x="72" y="19" width="1" height="11" fill="#2cd696"/><rect x="73" y="4" width="1" height="11" fill="#2cd696"/><rect x="73" y="20" width="1" height="10" fill="#2cd696"/><rect x="74" y="5" width="1" height="10" fill="#2cd696"/><rect x="74" y="19" width="1" height="11" fill="#2cd696"/><rect x="75" y="4" width="1" height="11" fill="#2cd696"/><rect x="75" y="20" width="1" height="10" fill="#2cd696"/><rect x="76" y="4" width="1" height="11" fill="#2cd696"/><rect x="76" y="20" width="1" height="10" fill="#2cd696"/><rect x="77" y="4" width="1" height="11" fill="#2cd696"/><rect x="77" y="19" width="1" height="11" fill="#2cd696"/><rect x="78" y="6" width="1" height="9" fill="#2cd696"/><rect x="78" y="19" width="1" height="11" fill="#2cd696"/><rect x="79" y="7" width="1" height="8" fill="#2cd696"/><rect x="79" y="19" width="1" height="11" fill="#2cd696"/><rect x="80" y="4" width="1" height="11" fill="#2cd696"/><rect x="80" y="19" width="1" height="11" fill="#2cd696"/><rect x="81" y="4" width="1" height="11" fill="#2cd696"/><rect x="81" y="22" width="1" height="8" fill="#2cd696"/><rect x="82" y="5" width="1" height="10" fill="#2cd696"/><rect x="82" y="20" width="1" height="10" fill="#2cd696"/><rect x="83" y="5" width="1" height="10" fill="#2cd696"/><rect x="83" y="22" width="1" height="8" fill="#2cd696"/><rect x="84" y="5" width="1" height="10" fill="#2cd696"/><rect x="84" y="20" width="1" height="10" fill="#2cd696"/><rect x="85" y="6" width="1" height="9" fill="#2cd696"/><rect x="85" y="22" width="1" height="8" fill="#2cd696"/><rect x="86" y="5" width="1" height="10" fill="#2cd696"/><rect x="86" y="21" width="1" height="9" fill="#2cd696"/><rect x="87" y="5" width="1" height="10" fill="#2cd696"/><rect x="87" y="19" width="1" height="11" fill="#2cd696"/><rect x="88" y="5" width="1" height="10" fill="#2cd696"/><rect x="88" y="22" width="1" height="8" fill="#2cd696"/><rect x="89" y="5" width="1" height="10" fill="#2cd696"/><rect x="89" y="19" width="1" height="11" fill="#2cd696"/><rect x="90" y="5" width="1" height="10" fill="#2cd696"/><rect x="90" y="21" width="1" height="9" fill="#2cd696"/><rect x="91" y="6" width="1" height="9" fill="#2cd696"/><rect x="91" y="21" width="1" height="9" fill="#2cd696"/><rect x="92" y="4" width="1" height="11" fill="#2cd696"/><rect x="92" y="19" width="1" height="11" fill="#2cd696"/><rect x="93" y="5" width="1" height="10" fill="#2cd696"/><rect x="93" y="19" width="1" height="11" fill="#2cd696"/><rect x="94" y="5" width="1" height="10" fill="#2cd696"/><rect x="94" y="19" width="1" height="11" fill="#2cd696"/><rect x="95" y="5" width="1" height="10" fill="#2cd696"/><rect x="95" y="19" width="1" height="11" fill="#2cd696"/><rect x="96" y="4" width="1" height="11" fill="#2cd696"/><rect x="96" y="22" width="1" height="8" fill="#2cd696"/><rect x="97" y="5" width="1" height="10" fill="#2cd696"/><rect x="97" y="20" width="1" height="10" fill="#2cd696"/><rect x="98" y="4" width="1" height="11" fill="#2cd696"/><rect x="98" y="19" width="1" height="11" fill="#2cd696"/><rect x="99" y="5" width="1" height="10" fill="#2cd696"/><rect x="99" y="20" width="1" height="10" fill="#2cd696"/><rect x="100" y="5" width="1" height="10" fill="#2cd696"/><rect x="100" y="21" width="1" height="9" fill="#2cd696"/><rect x="101" y="4" width="1" height="11" fill="#2cd696"/><rect x="101" y="19" width="1" height="11" fill="#2cd696"/><rect x="102" y="6" width="1" height="9" fill="#2cd696"/><rect x="102" y="21" width="1" height="9" fill="#2cd696"/><rect x="103" y="4" width="1" height="11" fill="#2cd696"/><rect x="103" y="20" width="1" height="10" fill="#2cd696"/><rect x="104" y="4" width="1" height="11" fill="#2cd696"/><rect x="104" y="21" width="1" height="9" fill="#2cd696"/><rect x="105" y="4" width="1" height="11" fill="#2cd696"/><rect x="105" y="20" width="1" height="10" fill="#2cd696"/><rect x="106" y="6" width="1" height="9" fill="#2cd696"/><rect x="106" y="19" width="1" height="11" fill="#2cd696"/><rect x="107" y="6" width="1" height="9" fill="#2cd696"/><rect x="107" y="20" width="1" height="10" fill="#2cd696"/><rect x="108" y="4" width="1" height="11" fill="#2cd696"/><rect x="108" y="20" width="1" height="10" fill="#2cd696"/><rect x="109" y="4" width="1" height="11" fill="#2cd696"/><rect x="109" y="21" width="1" height="9" fill="#2cd696"/><rect x="110" y="4" width="1" height="11" fill="#2cd696"/><rect x="110" y="19" width="1" height="11" fill="#2cd696"/><rect x="111" y="4" width="1" height="11" fill="#2cd696"/><rect x="111" y="21" width="1" height="9" fill="#2cd696"/><rect x="112" y="5" width="1" height="10" fill="#2cd696"/><rect x="112" y="19" width="1" height="11" fill="#2cd696"/><rect x="113" y="5" width="1" height="10" fill="#2cd696"/><rect x="113" y="20" width="1" height="10" fill="#2cd696"/><rect x="114" y="4" width="1" height="11" fill="#2cd696"/><rect x="114" y="19" width="1" height="11" fill="#2cd696"/><rect x="115" y="4" width="1" height="11" fill="#2cd696"/><rect x="115" y="19" width="1" height="11" fill="#2cd696"/><rect x="116" y="4" width="1" height="11" fill="#2cd696"/><rect x="116" y="22" width="1" height="8" fill="#2cd696"/><rect x="117" y="4" width="1" height="11" fill="#2cd696"/><rect x="117" y="22" width="1" height="8" fill="#2cd696"/><rect x="118" y="5" width="1" height="10" fill="#2cd696"/><rect x="118" y="19" width="1" height="11" fill="#2cd696"/><rect x="119" y="4" width="1" height="11" fill="#2cd696"/><rect x="119" y="22" width="1" height="8" fill="#2cd696"/><rect x="120" y="5" width="1" height="10" fill="#2cd696"/><rect x="120" y="19" width="1" height="11" fill="#2cd696"/><rect x="121" y="7" width="1" height="8" fill="#2cd696"/><rect x="121" y="22" width="1" height="8" fill="#2cd696"/><rect x="122" y="4" width="1" height="11" fill="#2cd696"/><rect x="122" y="20" width="1" height="10" fill="#2cd696"/><rect x="123" y="6" width="1" height="9" fill="#2cd696"/><rect x="123" y="21" width="1" height="9" fill="#2cd696"/><rect x="124" y="4" width="1" height="11" fill="#2cd696"/><rect x="124" y="19" width="1" height="11" fill="#2cd696"/><rect x="125" y="5" width="1" height="10" fill="#2cd696"/><rect x="125" y="19" width="1" height="11" fill="#2cd696"/><rect x="126" y="6" width="1" height="9" fill="#2cd696"/><rect x="126" y="22" width="1" height="8" fill="#2cd696"/><rect x="127" y="4" width="1" height="11" fill="#2cd696"/><rect x="127" y="19" width="1" height="11" fill="#2cd696"/><rect x="128" y="4" width="1" height="11" fill="#2cd696"/><rect x="128" y="19" width="1" height="11" fill="#2cd696"/><rect x="129" y="6" width="1" height="9" fill="#2cd696"/><rect x="129" y="20" width="1" height="10" fill="#2cd696"/><rect x="130" y="6" width="1" height="9" fill="#2cd696"/><rect x="130" y="21" width="1" height="9" fill="#2cd696"/><rect x="131" y="4" width="1" height="11" fill="#2cd696"/><rect x="131" y="19" width="1" height="11" fill="#2cd696"/><rect x="132" y="5" width="1" height="10" fill="#2cd696"/><rect x="132" y="19" width="1" height="11" fill="#2cd696"/><rect x="133" y="4" width="1" height="11" fill="#2cd696"/><rect x="133" y="21" width="1" height="9" fill="#2cd696"/><rect x="134" y="7" width="1" height="8" fill="#2cd696"/><rect x="134" y="19" width="1" height="11" fill="#2cd696"/><rect x="135" y="5" width="1" height="10" fill="#2cd696"/><rect x="135" y="22" width="1" height="8" fill="#2cd696"/><rect x="136" y="7" width="1" height="8" fill="#2cd696"/><rect x="136" y="19" width="1" height="11" fill="#2cd696"/><rect x="137" y="4" width="1" height="11" fill="#2cd696"/><rect x="137" y="19" width="1" height="11" fill="#2cd696"/><rect x="138" y="6" width="1" height="9" fill="#2cd696"/><rect x="138" y="21" width="1" height="9" fill="#2cd696"/><rect x="139" y="4" width="1" height="11" fill="#2cd696"/><rect x="139" y="20" width="1" height="10" fill="#2cd696"/><rect x="140" y="5" width="1" height="10" fill="#2cd696"/><rect x="140" y="19" width="1" height="11" fill="#2cd696"/><rect x="141" y="4" width="1" height="11" fill="#2cd696"/><rect x="141" y="22" width="1" height="8" fill="#2cd696"/><rect x="142" y="4" width="1" height="11" fill="#2cd696"/><rect x="142" y="19" width="1" height="11" fill="#2cd696"/><rect x="143" y="5" width="1" height="10" fill="#2cd696"/><rect x="143" y="19" width="1" height="11" fill="#2cd696"/><rect x="144" y="4" width="1" height="11" fill="#2cd696"/><rect x="144" y="22" width="1" height="8" fill="#2cd696"/><rect x="145" y="7" width="1" height="8" fill="#2cd696"/><rect x="145" y="22" width="1" height="8" fill="#2cd696"/><rect x="146" y="5" width="1" height="10" fill="#2cd696"/><rect x="146" y="19" width="1" height="11" fill="#2cd696"/><rect x="147" y="7" width="1" height="8" fill="#2cd696"/><rect x="147" y="19" width="1" height="11" fill="#2cd696"/><rect x="148" y="4" width="1" height="11" fill="#2cd696"/><rect x="148" y="22" width="1" height="8" fill="#2cd696"/><rect x="149" y="7" width="1" height="8" fill="#2cd696"/><rect x="149" y="21" width="1" height="9" fill="#2cd696"/><rect x="150" y="4" width="1" height="11" fill="#2cd696"/><rect x="150" y="22" width="1" height="8" fill="#2cd696"/><rect x="151" y="5" width="1" height="10" fill="#2cd696"/><rect x="151" y="19" width="1" height="11" fill="#2cd696"/><rect x="152" y="5" width="1" height="10" fill="#2cd696"/><rect x="152" y="19" width="1" height="11" fill="#2cd696"/><rect x="153" y="5" width="1" height="10" fill="#2cd696"/><rect x="153" y="19" width="1" height="11" fill="#2cd696"/><rect x="154" y="5" width="1" height="10" fill="#2cd696"/><rect x="154" y="22" width="1" height="8" fill="#2cd696"/><rect x="155" y="7" width="1" height="8" fill="#2cd696"/><rect x="155" y="19" width="1" height="11" fill="#2cd696"/><rect x="156" y="5" width="1" height="10" fill="#2cd696"/><rect x="156" y="19" width="1" height="11" fill="#2cd696"/><rect x="157" y="6" width="1" height="9" fill="#2cd696"/><rect x="157" y="20" width="1" height="10" fill="#2cd696"/><rect x="158" y="4" width="1" height="11" fill="#2cd696"/><rect x="158" y="20" width="1" height="10" fill="#2cd696"/><rect x="159" y="5" width="1" height="10" fill="#2cd696"/><rect x="159" y="20" width="1" height="10" fill="#2cd696"/><rect x="160" y="4" width="1" height="11" fill="#2cd696"/><rect x="160" y="20" width="1" height="10" fill="#2cd696"/><rect x="161" y="4" width="1" height="11" fill="#2cd696"/><rect x="161" y="19" width="1" height="11" fill="#2cd696"/><rect x="162" y="4" width="1" height="11" fill="#2cd696"/><rect x="162" y="20" width="1" height="10" fill="#2cd696"/><rect x="163" y="7" width="1" height="8" fill="#2cd696"/><rect x="163" y="20" width="1" height="10" fill="#2cd696"/><rect x="164" y="5" width="1" height="10" fill="#2cd696"/><rect x="164" y="20" width="1" height="10" fill="#2cd696"/><rect x="165" y="5" width="1" height="10" fill="#2cd696"/><rect x="165" y="21" width="1" height="9" fill="#2cd696"/><rect x="166" y="4" width="1" height="11" fill="#2cd696"/><rect x="166" y="19" width="1" height="11" fill="#2cd696"/><rect x="167" y="6" width="1" height="9" fill="#2cd696"/><rect x="167" y="20" width="1" height="10" fill="#2cd696"/><rect x="168" y="7" width="1" height="8" fill="#2cd696"/><rect x="168" y="22" width="1" height="8" fill="#2cd696"/><rect x="169" y="6" width="1" height="9" fill="#2cd696"/><rect x="169" y="21" width="1" height="9" fill="#2cd696"/><rect x="170" y="5" width="1" height="10" fill="#2cd696"/><rect x="170" y="19" width="1" height="11" fill="#2cd696"/><rect x="171" y="5" width="1" height="10" fill="#2cd696"/><rect x="171" y="19" width="1" height="11" fill="#2cd696"/><rect x="172" y="4" width="1" height="11" fill="#2cd696"/><rect x="172" y="22" width="1" height="8" fill="#2cd696"/><rect x="173" y="4" width="1" height="11" fill="#2cd696"/><rect x="173" y="22" width="1" height="8" fill="#2cd696"/><rect x="174" y="5" width="1" height="10" fill="#2cd696"/><rect x="174" y="19" width="1" height="11" fill="#2cd696"/><rect x="175" y="4" width="1" height="11" fill="#2cd696"/><rect x="175" y="22" width="1" height="8" fill="#2cd696"/><rect x="176" y="4" width="1" height="11" fill="#2cd696"/><rect x="176" y="19" width="1" height="11" fill="#2cd696"/><rect x="177" y="4" width="1" height="11" fill="#2cd696"/><rect x="177" y="22" width="1" height="8" fill="#2cd696"/><rect x="178" y="6" width="1" height="9" fill="#2cd696"/><rect x="178" y="20" width="1" height="10" fill="#2cd696"/><rect x="179" y="4" width="1" height="11" fill="#2cd696"/><rect x="179" y="20" width="1" height="10" fill="#2cd696"/><rect x="180" y="5" width="1" height="10" fill="#2cd696"/><rect x="180" y="19" width="1" height="11" fill="#2cd696"/><rect x="181" y="4" width="1" height="11" fill="#2cd696"/><rect x="181" y="20" width="1" height="10" fill="#2cd696"/><rect x="182" y="6" width="1" height="9" fill="#2cd696"/><rect x="182" y="19" width="1" height="11" fill="#2cd696"/><rect x="183" y="4" width="1" height="11" fill="#2cd696"/><rect x="183" y="20" width="1" height="10" fill="#2cd696"/><rect x="184" y="4" width="1" height="11" fill="#2cd696"/><rect x="184" y="19" width="1" height="11" fill="#2cd696"/><rect x="185" y="6" width="1" height="9" fill="#2cd696"/><rect x="185" y="19" width="1" height="11" fill="#2cd696"/><rect x="186" y="5" width="1" height="10" fill="#2cd696"/><rect x="186" y="20" width="1" height="10" fill="#2cd696"/><rect x="187" y="5" width="1" height="10" fill="#2cd696"/><rect x="187" y="19" width="1" height="11" fill="#2cd696"/><rect x="188" y="5" width="1" height="10" fill="#2cd696"/><rect x="188" y="19" width="1" height="11" fill="#2cd696"/><rect x="189" y="4" width="1" height="11" fill="#2cd696"/><rect x="189" y="19" width="1" height="11" fill="#2cd696"/><rect x="190" y="4" width="1" height="11" fill="#2cd696"/><rect x="190" y="22" width="1" height="8" fill="#2cd696"/><rect x="191" y="5" width="1" height="10" fill="#2cd696"/><rect x="191" y="20" width="1" height="10" fill="#2cd696"/><rect x="192" y="7" width="1" height="8" fill="#2cd696"/><rect x="192" y="22" width="1" height="8" fill="#2cd696"/><rect x="193" y="4" width="1" height="11" fill="#2cd696"/><rect x="193" y="19" width="1" height="11" fill="#2cd696"/><rect x="194" y="4" width="1" height="11" fill="#2cd696"/><rect x="194" y="19" width="1" height="11" fill="#2cd696"/><rect x="195" y="4" width="1" height="11" fill="#2cd696"/><rect x="195" y="20" width="1" height="10" fill="#2cd696"/><rect x="196" y="7" width="1" height="8" fill="#2cd696"/><rect x="196" y="19" width="1" height="11" fill="#2cd696"/><rect x="197" y="4" width="1" height="11" fill="#2cd696"/><rect x="197" y="19" width="1" height="11" fill="#2cd696"/><rect x="198" y="7" width="1" height="8" fill="#2cd696"/><rect x="198" y="19" width="1" height="11" fill="#2cd696"/><rect x="199" y="7" width="1" height="8" fill="#2cd696"/><rect x="199" y="19" width="1" height="11" fill="#2cd696"/><rect x="200" y="7" width="1" height="8" fill="#2cd696"/><rect x="200" y="19" width="1" height="11" fill="#2cd696"/><rect x="201" y="5" width="1" height="10" fill="#2cd696"/><rect x="201" y="21" width="1" height="9" fill="#2cd696"/><rect x="202" y="5" width="1" height="10" fill="#2cd696"/><rect x="202" y="22" width="1" height="8" fill="#2cd696"/><rect x="203" y="5" width="1" height="10" fill="#2cd696"/><rect x="203" y="19" width="1" height="11" fill="#2cd696"/><rect x="204" y="7" width="1" height="8" fill="#2cd696"/><rect x="204" y="19" width="1" height="11" fill="#2cd696"/><rect x="205" y="4" width="1" height="11" fill="#2cd696"/><rect x="205" y="19" width="1" height="11" fill="#2cd696"/><rect x="206" y="5" width="1" height="10" fill="#2cd696"/><rect x="206" y="20" width="1" height="10" fill="#2cd696"/><rect x="207" y="5" width="1" height="10" fill="#2cd696"/><rect x="207" y="20" width="1" height="10" fill="#2cd696"/><rect x="208" y="4" width="1" height="11" fill="#2cd696"/><rect x="208" y="20" width="1" height="10" fill="#2cd696"/><rect x="209" y="4" width="1" height="11" fill="#2cd696"/><rect x="209" y="22" width="1" height="8" fill="#2cd696"/><rect x="210" y="7" width="1" height="8" fill="#2cd696"/><rect x="210" y="19" width="1" height="11" fill="#2cd696"/><rect x="211" y="7" width="1" height="8" fill="#2cd696"/><rect x="211" y="19" width="1" height="11" fill="#2cd696"/><rect x="212" y="7" width="1" height="8" fill="#2cd696"/><rect x="212" y="19" width="1" height="11" fill="#2cd696"/><rect x="213" y="4" width="1" height="11" fill="#2cd696"/><rect x="213" y="19" width="1" height="11" fill="#2cd696"/><rect x="214" y="4" width="1" height="11" fill="#2cd696"/><rect x="214" y="19" width="1" height="11" fill="#2cd696"/><rect x="215" y="5" width="1" height="10" fill="#2cd696"/><rect x="215" y="19" width="1" height="11" fill="#2cd696"/><rect x="216" y="7" width="1" height="8" fill="#2cd696"/><rect x="216" y="21" width="1" height="9" fill="#2cd696"/><rect x="217" y="4" width="1" height="11" fill="#2cd696"/><rect x="217" y="20" width="1" height="10" fill="#2cd696"/><rect x="218" y="5" width="1" height="10" fill="#2cd696"/><rect x="218" y="20" width="1" height="10" fill="#2cd696"/><rect x="219" y="4" width="1" height="11" fill="#2cd696"/><rect x="219" y="19" width="1" height="11" fill="#2cd696"/><rect x="220" y="4" width="1" height="11" fill="#2cd696"/><rect x="220" y="19" width="1" height="11" fill="#2cd696"/><rect x="221" y="4" width="1" height="11" fill="#2cd696"/><rect x="221" y="20" width="1" height="10" fill="#2cd696"/><rect x="222" y="6" width="1" height="9" fill="#2cd696"/><rect x="222" y="20" width="1" height="10" fill="#2cd696"/><rect x="223" y="5" width="1" height="10" fill="#2cd696"/><rect x="223" y="19" width="1" height="11" fill="#2cd696"/><rect x="224" y="4" width="1" height="11" fill="#2cd696"/><rect x="224" y="19" width="1" height="11" fill="#2cd696"/><rect x="225" y="4" width="1" height="11" fill="#2cd696"/><rect x="225" y="19" width="1" height="11" fill="#2cd696"/><rect x="226" y="5" width="1" height="10" fill="#2cd696"/><rect x="226" y="19" width="1" height="11" fill="#2cd696"/><rect x="227" y="4" width="1" height="11" fill="#2cd696"/><rect x="227" y="20" width="1" height="10" fill="#2cd696"/><rect x="228" y="4" width="1" height="11" fill="#2cd696"/><rect x="228" y="21" width="1" height="9" fill="#2cd696"/><rect x="229" y="6" width="1" height="9" fill="#2cd696"/><rect x="229" y="20" width="1" height="10" fill="#2cd696"/><rect x="230" y="7" width="1" height="8" fill="#2cd696"/><rect x="230" y="19" width="1" height="11" fill="#2cd696"/><rect x="231" y="5" width="1" height="10" fill="#2cd696"/><rect x="231" y="19" width="1" height="11" fill="#2cd696"/><rect x="232" y="4" width="1" height="11" fill="#2cd696"/><rect x="232" y="19" width="1" height="11" fill="#2cd696"/><rect x="233" y="5" width="1" height="10" fill="#2cd696"/><rect x="233" y="20" width="1" height="10" fill="#2cd696"/><rect x="234" y="6" width="1" height="9" fill="#2cd696"/><rect x="234" y="22" width="1" height="8" fill="#2cd696"/><rect x="235" y="5" width="1" height="10" fill="#2cd696"/><rect x="235" y="20" width="1" height="10" fill="#2cd696"/><rect x="236" y="6" width="1" height="9" fill="#2cd696"/><rect x="236" y="22" width="1" height="8" fill="#2cd696"/><rect x="237" y="4" width="1" height="11" fill="#2cd696"/><rect x="237" y="20" width="1" height="10" fill="#2cd696"/><rect x="238" y="5" width="1" height="10" fill="#2cd696"/><rect x="238" y="19" width="1" height="11" fill="#2cd696"/><rect x="239" y="4" width="1" height="11" fill="#2cd696"/><rect x="239" y="21" width="1" height="9" fill="#2cd696"/><rect x="240" y="5" width="1" height="10" fill="#2cd696"/><rect x="240" y="22" width="1" height="8" fill="#2cd696"/><rect x="241" y="6" width="1" height="9" fill="#2cd696"/><rect x="241" y="19" width="1" height="11" fill="#2cd696"/><rect x="242" y="5" width="1" height="10" fill="#2cd696"/><rect x="242" y="21" width="1" height="9" fill="#2cd696"/><rect x="243" y="5" width="1" height="10" fill="#2cd696"/><rect x="243" y="20" width="1" height="10" fill="#2cd696"/><rect x="244" y="4" width="1" height="11" fill="#2cd696"/><rect x="244" y="19" width="1" height="11" fill="#2cd696"/><rect x="245" y="4" width="1" height="11" fill="#2cd696"/><rect x="245" y="20" width="1" height="10" fill="#2cd696"/><rect x="246" y="4" width="1" height="11" fill="#2cd696"/><rect x="246" y="21" width="1" height="9" fill="#2cd696"/><rect x="247" y="5" width="1" height="10" fill="#2cd696"/><rect x="247" y="19" width="1" height="11" fill="#2cd696"/><rect x="248" y="7" width="1" height="8" fill="#2cd696"/><rect x="248" y="20" width="1" height="10" fill="#2cd696"/><rect x="249" y="4" width="1" height="11" fill="#2cd696"/><rect x="249" y="20" width="1" height="10" fill="#2cd696"/><rect x="250" y="4" width="1" height="11" fill="#2cd696"/><rect x="250" y="19" width="1" height="11" fill="#2cd696"/><rect x="251" y="4" width="1" height="11" fill="#2cd696"/><rect x="251" y="19" width="1" height="11" fill="#2cd696"/><rect x="252" y="5" width="1" height="10" fill="#2cd696"/><rect x="252" y="22" width="1" height="8" fill="#2cd696"/><rect x="253" y="7" width="1" height="8" fill="#2cd696"/><rect x="253" y="19" width="1" height="11" fill="#2cd696"/><rect x="254" y="4" width="1" height="11" fill="#2cd696"/><rect x="254" y="20" width="1" height="10" fill="#2cd696"/><rect x="255" y="6" width="1" height="9" fill="#2cd696"/><rect x="255" y="19" width="1" height="11" fill="#2cd696"/><rect x="256" y="7" width="1" height="8" fill="#2cd696"/><rect x="256" y="21" width="1" height="9" fill="#2cd696"/><rect x="257" y="6" width="1" height="9" fill="#2cd696"/><rect x="257" y="22" width="1" height="8" fill="#2cd696"/><rect x="258" y="5" width="1" height="10" fill="#2cd696"/><rect x="258" y="22" width="1" height="8" fill="#2cd696"/><rect x="259" y="5" width="1" height="10" fill="#2cd696"/><rect x="259" y="21" width="1" height="9" fill="#2cd696"/><rect x="260" y="4" width="1" height="11" fill="#2cd696"/><rect x="260" y="21" width="1" height="9" fill="#2cd696"/><rect x="261" y="4" width="1" height="11" fill="#2cd696"/><rect x="261" y="20" width="1" height="10" fill="#2cd696"/><rect x="262" y="5" width="1" height="10" fill="#2cd696"/><rect x="262" y="19" width="1" height="11" fill="#2cd696"/><rect x="263" y="7" width="1" height="8" fill="#2cd696"/><rect x="263" y="20" width="1" height="10" fill="#2cd696"/><rect x="264" y="6" width="1" height="9" fill="#2cd696"/><rect x="264" y="19" width="1" height="11" fill="#2cd696"/><rect x="265" y="5" width="1" height="10" fill="#2cd696"/><rect x="265" y="19" width="1" height="11" fill="#2cd696"/><rect x="266" y="4" width="1" height="11" fill="#2cd696"/><rect x="266" y="22" width="1" height="8" fill="#2cd696"/><rect x="267" y="5" width="1" height="10" fill="#2cd696"/><rect x="267" y="19" width="1" height="11" fill="#2cd696"/><rect x="268" y="5" width="1" height="10" fill="#2cd696"/><rect x="268" y="19" width="1" height="11" fill="#2cd696"/><rect x="269" y="5" width="1" height="10" fill="#2cd696"/><rect x="269" y="19" width="1" height="11" fill="#2cd696"/><rect x="270" y="6" width="1" height="9" fill="#2cd696"/><rect x="270" y="20" width="1" height="10" fill="#2cd696"/><rect x="271" y="4" width="1" height="11" fill="#2cd696"/><rect x="271" y="22" width="1" height="8" fill="#2cd696"/><rect x="272" y="4" width="1" height="11" fill="#2cd696"/><rect x="272" y="19" width="1" height="11" fill="#2cd696"/><rect x="273" y="7" width="1" height="8" fill="#2cd696"/><rect x="273" y="22" width="1" height="8" fill="#2cd696"/><rect x="274" y="4" width="1" height="11" fill="#2cd696"/><rect x="274" y="19" width="1" height="11" fill="#2cd696"/><rect x="275" y="7" width="1" height="8" fill="#2cd696"/><rect x="275" y="19" width="1" height="11" fill="#2cd696"/><rect x="276" y="6" width="1" height="9" fill="#2cd696"/><rect x="276" y="20" width="1" height="10" fill="#2cd696"/><rect x="277" y="7" width="1" height="8" fill="#2cd696"/><rect x="277" y="21" width="1" height="9" fill="#2cd696"/><rect x="278" y="4" width="1" height="11" fill="#2cd696"/><rect x="278" y="20" width="1" height="10" fill="#2cd696"/><rect x="279" y="4" width="1" height="11" fill="#2cd696"/><rect x="279" y="22" width="1" height="8" fill="#2cd696"/><rect x="280" y="4" width="1" height="11" fill="#2cd696"/><rect x="280" y="19" width="1" height="11" fill="#2cd696"/><rect x="281" y="7" width="1" height="8" fill="#2cd696"/><rect x="281" y="20" width="1" height="10" fill="#2cd696"/><rect x="282" y="5" width="1" height="10" fill="#2cd696"/><rect x="282" y="20" width="1" height="10" fill="#2cd696"/><rect x="283" y="6" width="1" height="9" fill="#2cd696"/><rect x="283" y="19" width="1" height="11" fill="#2cd696"/><rect x="284" y="4" width="1" height="11" fill="#2cd696"/><rect x="284" y="20" width="1" height="10" fill="#2cd696"/><rect x="285" y="6" width="1" height="9" fill="#2cd696"/><rect x="285" y="19" width="1" height="11" fill="#2cd696"/><rect x="286" y="5" width="1" height="10" fill="#2cd696"/><rect x="286" y="19" width="1" height="11" fill="#2cd696"/><rect x="287" y="5" width="1" height="10" fill="#2cd696"/><rect x="287" y="19" width="1" height="11" fill="#2cd696"/><rect x="288" y="7" width="1" height="8" fill="#2cd696"/><rect x="288" y="20" width="1" height="10" fill="#2cd696"/><rect x="289" y="4" width="1" height="11" fill="#2cd696"/><rect x="289" y="22" width="1" height="8" fill="#2cd696"/><rect x="290" y="4" width="1" height="11" fill="#2cd696"/><rect x="290" y="19" width="1" height="11" fill="#2cd696"/><rect x="291" y="4" width="1" height="11" fill="#2cd696"/><rect x="291" y="21" width="1" height="9" fill="#2cd696"/><rect x="292" y="4" width="1" height="11" fill="#2cd696"/><rect x="292" y="20" width="1" height="10" fill="#2cd696"/><rect x="293" y="5" width="1" height="10" fill="#2cd696"/><rect x="293" y="21" width="1" height="9" fill="#2cd696"/><rect x="294" y="7" width="1" height="8" fill="#2cd696"/><rect x="294" y="20" width="1" height="10" fill="#2cd696"/><rect x="295" y="4" width="1" height="11" fill="#2cd696"/><rect x="295" y="19" width="1" height="11" fill="#2cd696"/><rect x="296" y="5" width="1" height="10" fill="#2cd696"/><rect x="296" y="20" width="1" height="10" fill="#2cd696"/><rect x="297" y="4" width="1" height="11" fill="#2cd696"/><rect x="297" y="20" width="1" height="10" fill="#2cd696"/><rect x="298" y="5" width="1" height="10" fill="#2cd696"/><rect x="298" y="19" width="1" height="11" fill="#2cd696"/><rect x="299" y="5" width="1" height="10" fill="#2cd696"/><rect x="299" y="20" width="1" height="10" fill="#2cd696"/><rect x="300" y="4" width="1" height="11" fill="#2cd696"/><rect x="300" y="20" width="1" height="10" fill="#2cd696"/><rect x="301" y="7" width="1" height="8" fill="#2cd696"/><rect x="301" y="21" width="1" height="9" fill="#2cd696"/><rect x="302" y="4" width="1" height="11" fill="#2cd696"/><rect x="302" y="20" width="1" height="10" fill="#2cd696"/><rect x="303" y="6" width="1" height="9" fill="#2cd696"/><rect x="303" y="20" width="1" height="10" fill="#2cd696"/><rect x="304" y="7" width="1" height="8" fill="#2cd696"/><rect x="304" y="20" width="1" height="10" fill="#2cd696"/><rect x="305" y="6" width="1" height="9" fill="#2cd696"/><rect x="305" y="20" width="1" height="10" fill="#2cd696"/><rect x="306" y="6" width="1" height="9" fill="#2cd696"/><rect x="306" y="20" width="1" height="10" fill="#2cd696"/><rect x="307" y="4" width="1" height="11" fill="#2cd696"/><rect x="307" y="21" width="1" height="9" fill="#2cd696"/><rect x="308" y="5" width="1" height="10" fill="#2cd696"/><rect x="308" y="19" width="1" height="11" fill="#2cd696"/><rect x="309" y="4" width="1" height="11" fill="#2cd696"/><rect x="309" y="19" width="1" height="11" fill="#2cd696"/><rect x="310" y="5" width="1" height="10" fill="#2cd696"/><rect x="310" y="21" width="1" height="9" fill="#2cd696"/><rect x="311" y="5" width="1" height="10" fill="#2cd696"/><rect x="311" y="21" width="1" height="9" fill="#2cd696"/><rect x="312" y="5" width="1" height="10" fill="#2cd696"/><rect x="312" y="20" width="1" height="10" fill="#2cd696"/><rect x="313" y="5" width="1" height="10" fill="#2cd696"/><rect x="313" y="21" width="1" height="9" fill="#2cd696"/><rect x="314" y="7" width="1" height="8" fill="#2cd696"/><rect x="314" y="19" width="1" height="11" fill="#2cd696"/><rect x="315" y="4" width="1" height="11" fill="#2cd696"/><rect x="315" y="19" width="1" height="11" fill="#2cd696"/><rect x="316" y="7" width="1" height="8" fill="#2cd696"/><rect x="316" y="19" width="1" height="11" fill="#2cd696"/><rect x="317" y="4" width="1" height="11" fill="#2cd696"/><rect x="317" y="20" width="1" height="10" fill="#2cd696"/><rect x="318" y="5" width="1" height="10" fill="#2cd696"/><rect x="318" y="19" width="1" height="11" fill="#2cd696"/><rect x="319" y="4" width="1" height="11" fill="#2cd696"/><rect x="319" y="22" width="1" height="8" fill="#2cd696"/><rect x="320" y="6" width="1" height="9" fill="#2cd696"/><rect x="320" y="20" width="1" height="10" fill="#2cd696"/><rect x="321" y="7" width="1" height="8" fill="#2cd696"/><rect x="321" y="19" width="1" height="11" fill="#2cd696"/><rect x="322" y="6" width="1" height="9" fill="#2cd696"/><rect x="322" y="21" width="1" height="9" fill="#2cd696"/><rect x="323" y="7" width="1" height="8" fill="#2cd696"/><rect x="323" y="20" width="1" height="10" fill="#2cd696"/><rect x="324" y="5" width="1" height="10" fill="#2cd696"/><rect x="324" y="22" width="1" height="8" fill="#2cd696"/><rect x="325" y="5" width="1" height="10" fill="#2cd696"/><rect x="325" y="20" width="1" height="10" fill="#2cd696"/><rect x="326" y="4" width="1" height="11" fill="#2cd696"/><rect x="326" y="19" width="1" height="11" fill="#2cd696"/><rect x="327" y="4" width="1" height="11" fill="#2cd696"/><rect x="327" y="19" width="1" height="11" fill="#2cd696"/><rect x="328" y="4" width="1" height="11" fill="#2cd696"/><rect x="328" y="20" width="1" height="10" fill="#2cd696"/><rect x="329" y="7" width="1" height="8" fill="#2cd696"/><rect x="329" y="20" width="1" height="10" fill="#2cd696"/><rect x="330" y="4" width="1" height="11" fill="#2cd696"/><rect x="330" y="19" width="1" height="11" fill="#2cd696"/><rect x="331" y="5" width="1" height="10" fill="#2cd696"/><rect x="331" y="19" width="1" height="11" fill="#2cd696"/><rect x="332" y="4" width="1" height="11" fill="#2cd696"/><rect x="332" y="19" width="1" height="11" fill="#2cd696"/><rect x="333" y="5" width="1" height="10" fill="#2cd696"/><rect x="333" y="22" width="1" height="8" fill="#2cd696"/><rect x="334" y="7" width="1" height="8" fill="#2cd696"/><rect x="334" y="19" width="1" height="11" fill="#2cd696"/><rect x="335" y="5" width="1" height="10" fill="#2cd696"/><rect x="335" y="21" width="1" height="9" fill="#2cd696"/><rect x="336" y="5" width="1" height="10" fill="#2cd696"/><rect x="336" y="21" width="1" height="9" fill="#2cd696"/><rect x="337" y="5" width="1" height="10" fill="#2cd696"/><rect x="337" y="19" width="1" height="11" fill="#2cd696"/><rect x="338" y="5" width="1" height="10" fill="#2cd696"/><rect x="338" y="20" width="1" height="10" fill="#2cd696"/><rect x="339" y="7" width="1" height="8" fill="#2cd696"/><rect x="339" y="22" width="1" height="8" fill="#2cd696"/><rect x="340" y="6" width="1" height="9" fill="#2cd696"/><rect x="340" y="20" width="1" height="10" fill="#2cd696"/><rect x="341" y="4" width="1" height="11" fill="#2cd696"/><rect x="341" y="20" width="1" height="10" fill="#2cd696"/><rect x="342" y="6" width="1" height="9" fill="#2cd696"/><rect x="342" y="19" width="1" height="11" fill="#2cd696"/><rect x="343" y="7" width="1" height="8" fill="#2cd696"/><rect x="343" y="20" width="1" height="10" fill="#2cd696"/><rect x="344" y="7" width="1" height="8" fill="#2cd696"/><rect x="344" y="21" width="1" height="9" fill="#2cd696"/><rect x="345" y="4" width="1" height="11" fill="#2cd696"/><rect x="345" y="19" width="1" height="11" fill="#2cd696"/><rect x="346" y="4" width="1" height="11" fill="#2cd696"/><rect x="346" y="19" width="1" height="11" fill="#2cd696"/><rect x="347" y="4" width="1" height="11" fill="#2cd696"/><rect x="347" y="19" width="1" height="11" fill="#2cd696"/><rect x="348" y="5" width="1" height="10" fill="#2cd696"/><rect x="348" y="20" width="1" height="10" fill="#2cd696"/><rect x="349" y="5" width="1" height="10" fill="#2cd696"/><rect x="349" y="20" width="1" height="10" fill="#2cd696"/><rect x="350" y="6" width="1" height="9" fill="#2cd696"/><rect x="350" y="21" width="1" height="9" fill="#2cd696"/><rect x="351" y="6" width="1" height="9" fill="#2cd696"/><rect x="351" y="21" width="1" height="9" fill="#2cd696"/><rect x="352" y="7" width="1" height="8" fill="#2cd696"/><rect x="352" y="22" width="1" height="8" fill="#2cd696"/><rect x="353" y="7" width="1" height="8" fill="#2cd696"/><rect x="353" y="22" width="1" height="8" fill="#2cd696"/><rect x="354" y="8" width="1" height="7" fill="#2cd696"/><rect x="354" y="22" width="1" height="8" fill="#2cd696"/><rect x="355" y="8" width="1" height="7" fill="#2cd696"/><rect x="355" y="23" width="1" height="7" fill="#2cd696"/><rect x="356" y="9" width="1" height="6" fill="#2cd696"/><rect x="356" y="23" width="1" height="7" fill="#2cd696"/><rect x="357" y="9" width="1" height="6" fill="#2cd696"/><rect x="357" y="24" width="1" height="6" fill="#2cd696"/><rect x="358" y="10" width="1" height="5" fill="#2cd696"/><rect x="358" y="24" width="1" height="6" fill="#2cd696"/><rect x="359" y="10" width="1" height="5" fill="#2cd696"/><rect x="359" y="25" width="1" height="5" fill="#2cd696"/><rect x="360" y="11" width="1" height="4" fill="#2cd696"/><rect x="360" y="25" width="1" height="5" fill="#2cd696"/><rect x="361" y="11" width="1" height="4" fill="#2cd696"/><rect x="361" y="25" width="1" height="5" fill="#2cd696"/><rect x="362" y="12" width="1" height="3" fill="#2cd696"/><rect x="362" y="26" width="1" height="4" fill="#2cd696"/><rect x="363" y="12" width="1" height="3" fill="#2cd696"/><rect x="363" y="26" width="1" height="4" fill="#2cd696"/><rect x="364" y="13" width="1" height="2" fill="#2cd696"/><rect x="364" y="27" width="1" height="3" fill="#2cd696"/><rect x="365" y="13" width="1" height="2" fill="#2cd696"/><rect x="365" y="27" width="1" height="3" fill="#2cd696"/><rect x="366" y="14" width="1" height="1.3" fill="#2cd696"/><rect x="366" y="29" width="1" height="1" fill="#2cd696"/><rect x="367" y="14" width="1" height="1.3" fill="#2cd696"/><rect x="367" y="29" width="1" height="1" fill="#2cd696"/><rect x="368" y="14" width="1" height="1.3" fill="#2cd696"/><rect x="368" y="29" width="1" height="1" fill="#2cd696"/><rect x="369" y="14" width="1" height="1.3" fill="#2cd696"/><rect x="369" y="29" width="1" height="1" fill="#2cd696"/><rect x="370" y="14" width="1" height="1.3" fill="#2cd696"/><rect x="370" y="29" width="1" height="1" fill="#2cd696"/><rect x="371" y="14" width="1" height="1.3" fill="#2cd696"/><rect x="371" y="29" width="1" height="1" fill="#2cd696"/><rect x="372" y="14" width="1" height="1.3" fill="#2cd696"/><rect x="372" y="29" width="1" height="1" fill="#2cd696"/><rect x="373" y="14" width="1" height="1.3" fill="#2cd696"/><rect x="373" y="29" width="1" height="1" fill="#2cd696"/><rect x="374" y="14" width="1" height="1.3" fill="#2cd696"/><rect x="374" y="29" width="1" height="1" fill="#2cd696"/><rect x="375" y="14" width="1" height="1.3" fill="#2cd696"/><rect x="375" y="29" width="1" height="1" fill="#2cd696"/><rect x="376" y="14" width="1" height="1.3" fill="#2cd696"/><rect x="376" y="29" width="1" height="1" fill="#2cd696"/><rect x="377" y="14" width="1" height="1.3" fill="#2cd696"/><rect x="377" y="29" width="1" height="1" fill="#2cd696"/><rect x="378" y="14" width="1" height="1.3" fill="#2cd696"/><rect x="378" y="29" width="1" height="1" fill="#2cd696"/><rect x="379" y="14" width="1" height="1.3" fill="#2cd696"/><rect x="379" y="29" width="1" height="1" fill="#2cd696"/><rect x="380" y="14" width="1" height="1.3" fill="#2cd696"/><rect x="380" y="29" width="1" height="1" fill="#2cd696"/><rect x="381" y="14" width="1" height="1.3" fill="#2cd696"/><rect x="381" y="29" width="1" height="1" fill="#2cd696"/><rect x="382" y="14" width="1" height="1.3" fill="#2cd696"/><rect x="382" y="29" width="1" height="1" fill="#2cd696"/><rect x="383" y="14" width="1" height="1.3" fill="#2cd696"/><rect x="383" y="29" width="1" height="1" fill="#2cd696"/><rect x="384" y="14" width="1" height="1.3" fill="#2cd696"/><rect x="384" y="29" width="1" height="1" fill="#2cd696"/><rect x="385" y="14" width="1" height="1.3" fill="#2cd696"/><rect x="385" y="29" width="1" height="1" fill="#2cd696"/><rect x="386" y="14" width="1" height="1.3" fill="#2cd696"/><rect x="386" y="29" width="1" height="1" fill="#2cd696"/><rect x="387" y="14" width="1" height="1.3" fill="#2cd696"/><rect x="387" y="29" width="1" height="1" fill="#2cd696"/><rect x="388" y="14" width="1" height="1.3" fill="#2cd696"/><rect x="388" y="29" width="1" height="1" fill="#2cd696"/><rect x="389" y="14" width="1" height="1.3" fill="#2cd696"/><rect x="389" y="29" width="1" height="1" fill="#2cd696"/><rect x="390" y="14" width="1" height="1.3" fill="#2cd696"/><rect x="390" y="29" width="1" height="1" fill="#2cd696"/><rect x="391" y="14" width="1" height="1.3" fill="#2cd696"/><rect x="391" y="29" width="1" height="1" fill="#2cd696"/><rect x="392" y="14" width="1" height="1.3" fill="#2cd696"/><rect x="392" y="29" width="1" height="1" fill="#2cd696"/><rect x="393" y="14" width="1" height="1.3" fill="#2cd696"/><rect x="393" y="29" width="1" height="1" fill="#2cd696"/><rect x="394" y="14" width="1" height="1.3" fill="#2cd696"/><rect x="394" y="29" width="1" height="1" fill="#2cd696"/><rect x="395" y="14" width="1" height="1.3" fill="#2cd696"/><rect x="395" y="29" width="1" height="1" fill="#2cd696"/><rect x="396" y="14" width="1" height="1.3" fill="#2cd696"/><rect x="396" y="29" width="1" height="1" fill="#2cd696"/><rect x="397" y="14" width="1" height="1.3" fill="#2cd696"/><rect x="397" y="29" width="1" height="1" fill="#2cd696"/><rect x="398" y="14" width="1" height="1.3" fill="#2cd696"/><rect x="398" y="29" width="1" height="1" fill="#2cd696"/><rect x="399" y="14" width="1" height="1.3" fill="#2cd696"/><rect x="399" y="29" width="1" height="1" fill="#2cd696"/></svg>
<div class="a" style="left:941px;top:848px;width:17px;height:14px;background:#6e6e6e;border:1px solid #a4a4a4"></div>
<div class="t" style="left:944px;top:849px;font-size:12px;color:#1e1e1e;font-family:&quot;Liberation Serif&quot;,serif"><i>fx</i></div>
<svg class="a" style="left:928px;top:691px;" width="8" height="16" viewBox="0 0 8 16"><path d="M0 0H8V10L3 15H0Z" fill="#2d8ceb"/><rect x="0" y="10" width="2" height="4" fill="#000"/></svg>
<div class="a" style="left:928px;top:705px;width:2px;height:265px;background:#2d8ceb;"></div>
<div class="a" style="left:1778px;top:712px;width:13px;height:117px;background:#2e2e2e;border-radius:6px"></div>
<div class="a" style="left:1778px;top:850px;width:13px;height:113px;background:#2e2e2e;border-radius:6px"></div>
<svg class="a" style="left:1777px;top:713px;" width="14" height="14" viewBox="0 0 14 14"><circle cx="7" cy="7" r="5.3" fill="#232323" stroke="#a0a0a0" stroke-width="2.6"/></svg>
<svg class="a" style="left:1777px;top:822px;" width="14" height="14" viewBox="0 0 14 14"><circle cx="7" cy="7" r="5.3" fill="#232323" stroke="#a0a0a0" stroke-width="2.6"/></svg>
<svg class="a" style="left:1777px;top:843px;" width="14" height="14" viewBox="0 0 14 14"><circle cx="7" cy="7" r="5.3" fill="#232323" stroke="#a0a0a0" stroke-width="2.6"/></svg>
<svg class="a" style="left:1777px;top:956px;" width="14" height="14" viewBox="0 0 14 14"><circle cx="7" cy="7" r="5.3" fill="#232323" stroke="#a0a0a0" stroke-width="2.6"/></svg>
<div class="a" style="left:1777px;top:706px;width:1px;height:262px;background:#1c1c1c;"></div>
<div class="a" style="left:1805px;top:652px;width:1px;height:346px;background:#1c1c1c;"></div>
<div class="a" style="left:655px;top:972px;width:1121px;height:14px;background:#1d1d1d;border:1px solid #2a2a2a;border-radius:7px"></div>
<div class="a" style="left:655px;top:972px;width:396px;height:14px;background:#2e2e2e;border-radius:7px"></div>
<svg class="a" style="left:648px;top:972px;" width="14" height="14" viewBox="0 0 14 14"><circle cx="7" cy="7" r="5.3" fill="#232323" stroke="#a0a0a0" stroke-width="2.6"/></svg>
<svg class="a" style="left:1044px;top:972px;" width="14" height="14" viewBox="0 0 14 14"><circle cx="7" cy="7" r="5.3" fill="#232323" stroke="#a0a0a0" stroke-width="2.6"/></svg>
<div class="a" style="left:632px;top:997px;width:1173px;height:1px;background:#1c1c1c;"></div>
<div class="a" style="left:1813px;top:617px;width:106px;height:385px;background:#232323;"></div>
<div class="a" style="left:1828px;top:650px;width:48px;height:311px;background:#1f1f1f;border:1px solid #050505"></div>
<div class="a" style="left:1828px;top:661px;width:48px;height:1px;background:#050505;"></div>
<div class="a" style="left:1851.5px;top:650px;width:1px;height:12px;background:#050505;"></div>
<div class="a" style="left:1830px;top:957px;width:21px;height:2px;background:#e0e000;"></div>
<div class="a" style="left:1853px;top:957px;width:21px;height:2px;background:#e0e000;"></div>
<svg class="a" style="left:1877px;top:660px;" width="8" height="300" viewBox="0 0 8 300"><rect transform="translate(0,-660)" x="0" y="664.5" width="6" height="1" fill="#8a8a8a"/><rect transform="translate(0,-660)" x="0" y="669.4" width="2" height="1" fill="#6a6a6a"/><rect transform="translate(0,-660)" x="0" y="674.3" width="2" height="1" fill="#6a6a6a"/><rect transform="translate(0,-660)" x="0" y="679.1" width="2" height="1" fill="#6a6a6a"/><rect transform="translate(0,-660)" x="0" y="684.0" width="2" height="1" fill="#6a6a6a"/><rect transform="translate(0,-660)" x="0" y="688.9" width="2" height="1" fill="#6a6a6a"/><rect transform="translate(0,-660)" x="0" y="693.8" width="6" height="1" fill="#8a8a8a"/><rect transform="translate(0,-660)" x="0" y="698.7" width="2" height="1" fill="#6a6a6a"/><rect transform="translate(0,-660)" x="0" y="703.6" width="2" height="1" fill="#6a6a6a"/><rect transform="translate(0,-660)" x="0" y="708.5" width="2" height="1" fill="#6a6a6a"/><rect transform="translate(0,-660)" x="0" y="713.3" width="2" height="1" fill="#6a6a6a"/><rect transform="translate(0,-660)" x="0" y="718.2" width="2" height="1" fill="#6a6a6a"/><rect transform="translate(0,-660)" x="0" y="723.1" width="6" height="1" fill="#8a8a8a"/><rect transform="translate(0,-660)" x="0" y="728.0" width="2" height="1" fill="#6a6a6a"/><rect transform="translate(0,-660)" x="0" y="732.9" width="2" height="1" fill="#6a6a6a"/><rect transform="translate(0,-660)" x="0" y="737.8" width="2" height="1" fill="#6a6a6a"/><rect transform="translate(0,-660)" x="0" y="742.6" width="2" height="1" fill="#6a6a6a"/><rect transform="translate(0,-660)" x="0" y="747.5" width="2" height="1" fill="#6a6a6a"/><rect transform="translate(0,-660)" x="0" y="752.4" width="6" height="1" fill="#8a8a8a"/><rect transform="translate(0,-660)" x="0" y="757.3" width="2" height="1" fill="#6a6a6a"/><rect transform="translate(0,-660)" x="0" y="762.2" width="2" height="1" fill="#6a6a6a"/><rect transform="translate(0,-660)" x="0" y="767.0" width="2" height="1" fill="#6a6a6a"/><rect transform="translate(0,-660)" x="0" y="771.9" width="2" height="1" fill="#6a6a6a"/><rect transform="translate(0,-660)" x="0" y="776.8" width="2" height="1" fill="#6a6a6a"/><rect transform="translate(0,-660)" x="0" y="781.7" width="6" height="1" fill="#8a8a8a"/><rect transform="translate(0,-660)" x="0" y="786.6" width="2" height="1" fill="#6a6a6a"/><rect transform="translate(0,-660)" x="0" y="791.5" width="2" height="1" fill="#6a6a6a"/><rect transform="translate(0,-660)" x="0" y="796.4" width="2" height="1" fill="#6a6a6a"/><rect transform="translate(0,-660)" x="0" y="801.2" width="2" height="1" fill="#6a6a6a"/><rect transform="translate(0,-660)" x="0" y="806.1" width="2" height="1" fill="#6a6a6a"/><rect transform="translate(0,-660)" x="0" y="811.0" width="6" height="1" fill="#8a8a8a"/><rect transform="translate(0,-660)" x="0" y="815.9" width="2" height="1" fill="#6a6a6a"/><rect transform="translate(0,-660)" x="0" y="820.8" width="2" height="1" fill="#6a6a6a"/><rect transform="translate(0,-660)" x="0" y="825.6" width="2" height="1" fill="#6a6a6a"/><rect transform="translate(0,-660)" x="0" y="830.5" width="2" height="1" fill="#6a6a6a"/><rect transform="translate(0,-660)" x="0" y="835.4" width="2" height="1" fill="#6a6a6a"/><rect transform="translate(0,-660)" x="0" y="840.3" width="6" height="1" fill="#8a8a8a"/><rect transform="translate(0,-660)" x="0" y="845.2" width="2" height="1" fill="#6a6a6a"/><rect transform="translate(0,-660)" x="0" y="850.1" width="2" height="1" fill="#6a6a6a"/><rect transform="translate(0,-660)" x="0" y="855.0" width="2" height="1" fill="#6a6a6a"/><rect transform="translate(0,-660)" x="0" y="859.8" width="2" height="1" fill="#6a6a6a"/><rect transform="translate(0,-660)" x="0" y="864.7" width="2" height="1" fill="#6a6a6a"/><rect transform="translate(0,-660)" x="0" y="869.6" width="6" height="1" fill="#8a8a8a"/><rect transform="translate(0,-660)" x="0" y="874.5" width="2" height="1" fill="#6a6a6a"/><rect transform="translate(0,-660)" x="0" y="879.4" width="2" height="1" fill="#6a6a6a"/><rect transform="translate(0,-660)" x="0" y="884.2" width="2" height="1" fill="#6a6a6a"/><rect transform="translate(0,-660)" x="0" y="889.1" width="2" height="1" fill="#6a6a6a"/><rect transform="translate(0,-660)" x="0" y="894.0" width="2" height="1" fill="#6a6a6a"/><rect transform="translate(0,-660)" x="0" y="898.9" width="6" height="1" fill="#8a8a8a"/><rect transform="translate(0,-660)" x="0" y="903.8" width="2" height="1" fill="#6a6a6a"/><rect transform="translate(0,-660)" x="0" y="908.7" width="2" height="1" fill="#6a6a6a"/><rect transform="translate(0,-660)" x="0" y="913.5" width="2" height="1" fill="#6a6a6a"/><rect transform="translate(0,-660)" x="0" y="918.4" width="2" height="1" fill="#6a6a6a"/><rect transform="translate(0,-660)" x="0" y="923.3" width="2" height="1" fill="#6a6a6a"/><rect transform="translate(0,-660)" x="0" y="928.2" width="6" height="1" fill="#8a8a8a"/><rect transform="translate(0,-660)" x="0" y="933.1" width="2" height="1" fill="#6a6a6a"/><rect transform="translate(0,-660)" x="0" y="938.0" width="2" height="1" fill="#6a6a6a"/><rect transform="translate(0,-660)" x="0" y="942.9" width="2" height="1" fill="#6a6a6a"/><rect transform="translate(0,-660)" x="0" y="947.7" width="2" height="1" fill="#6a6a6a"/><rect transform="translate(0,-660)" x="0" y="952.6" width="2" height="1" fill="#6a6a6a"/><rect transform="translate(0,-660)" x="0" y="957.5" width="6" height="1" fill="#8a8a8a"/></svg>
<div class="t" style="left:1885px;top:659.5px;font-size:10.5px;color:#9d9d9d;">0</div>
<div class="t" style="left:1886px;top:688.8px;font-size:10.5px;color:#9d9d9d;">-6</div>
<div class="t" style="left:1886px;top:718.1px;font-size:10.5px;color:#9d9d9d;">-12</div>
<div class="t" style="left:1886px;top:747.4px;font-size:10.5px;color:#9d9d9d;">-18</div>
<div class="t" style="left:1886px;top:776.7px;font-size:10.5px;color:#9d9d9d;">-24</div>
<div class="t" style="left:1886px;top:806.0px;font-size:10.5px;color:#9d9d9d;">-30</div>
<div class="t" style="left:1886px;top:835.3px;font-size:10.5px;color:#9d9d9d;">-36</div>
<div class="t" style="left:1886px;top:864.6px;font-size:10.5px;color:#9d9d9d;">-42</div>
<div class="t" style="left:1886px;top:893.9px;font-size:10.5px;color:#9d9d9d;">-48</div>
<div class="t" style="left:1886px;top:923.2px;font-size:10.5px;color:#9d9d9d;">-54</div>
<div class="t" style="left:1885px;top:952.5px;font-size:10.5px;color:#9d9d9d;">dB</div>
<div class="a" style="left:1829px;top:966px;width:21px;height:21px;background:#1c1c1c;border:1px solid #2c2c2c;border-radius:3px"></div>
<div class="a" style="left:1853px;top:966px;width:21px;height:21px;background:#1c1c1c;border:1px solid #2c2c2c;border-radius:3px"></div>
<div class="t" style="left:1835px;top:970px;font-size:13px;color:#b0b0b0;">S</div>
<div class="t" style="left:1859px;top:970px;font-size:13px;color:#b0b0b0;">S</div>
<div class="a" style="left:0px;top:1005px;width:1920px;height:25px;background:#242424;"></div>
<div class="a" style="left:1887px;top:1005px;width:1px;height:25px;background:#303030;"></div>
<svg class="a" style="left:0px;top:1000px;" width="30" height="30" viewBox="0 0 30 30"><g fill="#a8a8a8"><circle cx="9.5" cy="18" r="6.8"/><circle cx="15.5" cy="16.2" r="7.2"/><rect x="9.5" y="18" width="6" height="6.8"/></g><g fill="#242424"><circle cx="9.5" cy="18" r="5.5"/><circle cx="15.5" cy="16.2" r="5.9"/><rect x="9.5" y="18" width="6" height="5.5"/></g><g fill="#b4b4b4"><circle cx="9.5" cy="18" r="4.2"/><circle cx="15.5" cy="16.2" r="4.6"/><rect x="9.5" y="17" width="6" height="5.4"/></g><path d="M14.6 17.3L12 15A4.3 4.3 0 1 0 9.5 22.4" fill="none" stroke="#242424" stroke-width="1.5"/><path d="M8.6 17.7L11.5 20.7A4.6 4.6 0 1 0 13.3 12.4" fill="none" stroke="#242424" stroke-width="1.5"/></svg>
<div class="a" style="left:0px;top:1030px;width:1920px;height:9px;background:#1c1c1c;"></div>
<div class="a" style="left:1179px;top:1030px;width:61px;height:9px;background:#4d4d4d;"></div>
<div class="a" style="left:1914px;top:1030px;width:1px;height:9px;background:#9a9a9a;"></div>
<div class="t" style="left:1790px;top:1035.5px;font-size:13px;color:#e8e8e8;">15:05</div>
<svg class="a" style="left:0px;top:0px;pointer-events:none" width="1920" height="1039" viewBox="0 0 1920 1039"><path d="M579.5 551.5L581.5 553L293 748.6L297.3 752.7L279 754.5L287.7 736.8L288.5 742Z" fill="#f51d19"/><path d="M585 572L587.5 573L462.6 923L468.5 922.3L453 935.5L449 916L454 920Z" fill="#f51d19"/><rect x="55" y="753" width="232.5" height="32.5" rx="5" fill="none" stroke="#f51d19" stroke-width="4.2"/><rect x="420.5" y="952" width="51.5" height="41.5" rx="6" fill="none" stroke="#f51d19" stroke-width="4.2"/></svg>
</body></html>
